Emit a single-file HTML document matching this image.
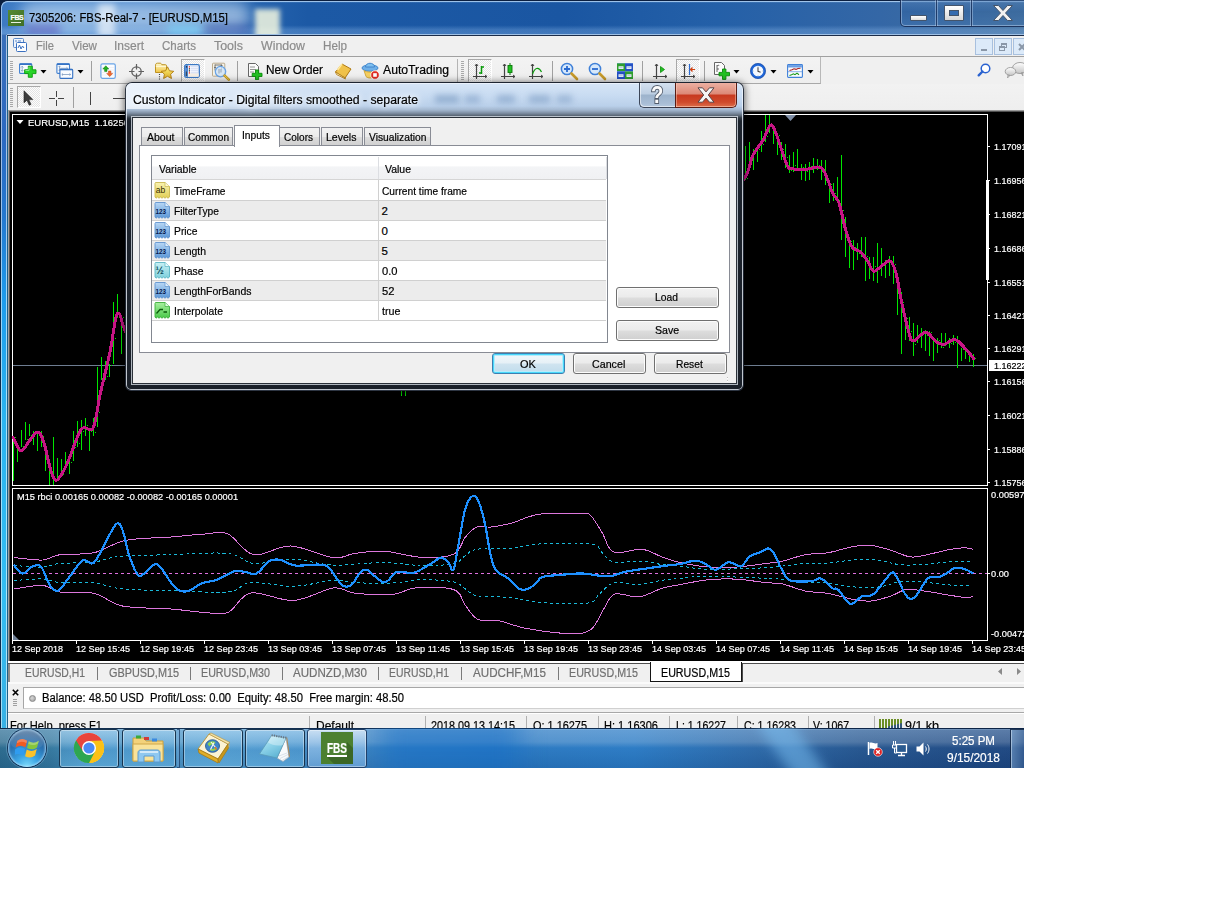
<!DOCTYPE html>
<html lang="en"><head>
<meta charset="utf-8">
<title>7305206: FBS-Real-7 - [EURUSD,M15]</title>
<style>
html,body{margin:0;padding:0;background:#fff;}
body{width:1228px;height:920px;overflow:hidden;position:relative;font-family:"Liberation Sans",sans-serif;font-size:12px;color:#000;}
#scr{position:absolute;left:0;top:0;width:1024px;height:768px;overflow:hidden;background:#f0f0f0;}
#scr div,#scr span,#scr svg{position:absolute;box-sizing:border-box;}
.t{white-space:pre;line-height:1;font-size:12px;-webkit-text-stroke:.2px currentColor;}
.m{color:#8c8c8c;font-size:12px;}
.d{font-size:11.5px;color:#000;}
.ax{font-size:9.5px;color:#fff;-webkit-text-stroke:.2px currentColor;}
.tab{font-size:12px;color:#707070;}
.sep{width:1px;background:#a0a0a0;}
.grip{width:3px;background:repeating-linear-gradient(to bottom,#a9a9a9 0,#a9a9a9 1px,transparent 1px,transparent 2px);}
.btn{border:1px solid #707070;border-radius:3px;background:linear-gradient(to bottom,#f2f2f2 0,#ebebeb 48%,#dddddd 52%,#cfcfcf 100%);box-shadow:inset 0 0 0 1px #fcfcfc;}
.dtab{border:1px solid #898c95;border-bottom:none;background:linear-gradient(to bottom,#f2f2f2 0,#ebebeb 48%,#dddddd 52%,#cfcfcf 100%);}
.row{left:0;width:454px;height:20px;border-bottom:1px solid #d0d0d0;}
.row.alt{background:#ececec;}
.tb{border:1px solid #17344f;border-radius:3px;background:linear-gradient(to bottom,rgba(175,218,246,.58) 0,rgba(110,178,226,.46) 45%,rgba(85,162,216,.42) 55%,rgba(110,190,236,.52) 100%);box-shadow:inset 0 0 0 1px rgba(255,255,255,.38);}
</style>
</head>
<body>
<div id="scr">
<!-- ===== main window frame / title bar ===== -->
<div id="titlebar" style="left:0;top:0;width:1024px;height:36px;background:linear-gradient(to right,#3d79c2 0,#3f82cc 6%,#3b7cc6 14%,#2a69b4 22%,#1c59a5 30%,#1a56a2 55%,#2460a8 70%,#3467a6 86%,#44719f 100%);overflow:hidden;">
  <div style="left:0;top:0;width:1024px;height:36px;background:linear-gradient(to bottom,rgba(0,10,40,.9) 0,rgba(0,10,40,.9) 1px,rgba(160,200,240,.55) 1px,rgba(160,200,240,.0) 3px,rgba(255,255,255,0) 70%,rgba(140,185,235,.3) 82%,rgba(140,185,235,.36) 95%,rgba(20,40,80,.7) 100%);"></div>
  <div style="left:20px;top:2px;width:230px;height:30px;border-radius:14px;background:rgba(225,238,252,.55);filter:blur(7px);"></div>
  <div style="left:98px;top:4px;width:17px;height:34px;background:rgba(255,255,255,.6);filter:blur(3px);"></div>
  <div style="left:168px;top:24px;width:34px;height:12px;background:rgba(120,220,255,.55);filter:blur(4px);"></div>
  <div style="left:255px;top:9px;width:25px;height:30px;background:rgba(245,248,225,.85);filter:blur(2.500px);"></div>
  <div style="left:26px;top:25px;width:34px;height:10px;background:rgba(70,50,170,.45);filter:blur(4px);"></div>
  <div style="left:205px;top:24px;width:45px;height:11px;background:rgba(30,50,150,.4);filter:blur(5px);"></div>
</div>
<div style="left:0;top:0;width:1040px;height:60px;border:1px solid #0b1f40;border-radius:7px 0 0 0;box-shadow:inset 1px 1px 0 rgba(190,220,250,.7);clip-path:inset(0 0 25px 0);"></div>
<div style="left:0;top:0;width:8px;height:8px;background:radial-gradient(circle at 8px 8px,transparent 0,transparent 7px,#0b1f40 7.500px);"></div>
<!-- app icon -->
<div style="left:8px;top:10px;width:16px;height:16px;background:linear-gradient(135deg,#558a34,#3f6e26);"><span class="t" style="left:2.500px;top:4px;font-size:7px;font-weight:bold;color:#fff;letter-spacing:-.4px;">FBS</span><div style="left:3px;top:12px;width:10px;height:1px;background:#e8f0e0;"></div></div>
<span class="t" id="ttl" style="left: 29px; top: 11.5px; font-size: 12.5px; --w: 199; transform-origin: 0px 0px; transform: scaleX(0.9065);">7305206: FBS-Real-7 - [EURUSD,M15]</span>
<!-- caption buttons -->
<div style="left:900px;top:-4px;width:140px;height:31px;border:1px solid rgba(20,40,80,.85);border-radius:0 0 0 5px;box-shadow:inset 0 0 0 1px rgba(200,220,245,.45);background:linear-gradient(to bottom,rgba(90,135,190,.55),rgba(50,100,165,.35) 45%,rgba(40,90,155,.25) 50%,rgba(70,120,180,.35));"></div>
<div style="left:936px;top:0;width:1px;height:26px;background:rgba(20,40,80,.7);box-shadow:1px 0 0 rgba(200,220,245,.4),-1px 0 0 rgba(200,220,245,.4);"></div>
<div style="left:971px;top:0;width:1px;height:26px;background:rgba(20,40,80,.7);box-shadow:1px 0 0 rgba(200,220,245,.4),-1px 0 0 rgba(200,220,245,.4);"></div>
<div style="left:910px;top:15px;width:17px;height:6px;background:linear-gradient(#fff,#dcdcdc);border:1px solid #44546a;border-radius:1px;"></div>
<div style="left:944px;top:5px;width:20px;height:16px;background:linear-gradient(#fff,#d8d8d8);border:1px solid #44546a;border-radius:1px;"><div style="left:4px;top:4px;width:10px;height:6px;background:#356cb0;border:1px solid #44546a;"></div></div>
<svg style="left:992px;top:4px;" width="22" height="18" viewBox="0 0 22 18"><path d="M1.5 1.5h5l4.5 5 4.500-5h5l-7 7.500 7 7.500h-5l-4.500-5-4.500 5h-5l7-7.500z" fill="#f2f2f2" stroke="#44546a" stroke-width="1"></path></svg>

<!-- left frame -->
<div style="left:0;top:35px;width:8px;height:700px;background:linear-gradient(to bottom,#3a70ba 0,#2c68c0 14%,#2478cf 26%,#1e9cec 38%,#2bb4f0 55%,#33bdf2 80%,#38b0e4 100%);"></div>
<div style="left:0;top:35px;width:1px;height:700px;background:#0b2a4c;"></div>
<div style="left:1px;top:35px;width:1px;height:700px;background:rgba(255,255,255,.55);"></div>
<div style="left:6px;top:35px;width:1px;height:700px;background:rgba(255,255,255,.6);"></div>
<div style="left:7px;top:35px;width:1px;height:700px;background:#1f5f85;"></div>

<!-- menu bar -->
<div style="left:7px;top:34px;width:1017px;height:1px;background:#9fc0e4;"></div><div style="left:7px;top:35px;width:1017px;height:1px;background:#1c2c48;"></div><div style="left:8px;top:36px;width:1016px;height:21px;background:#f0f0f0;border-bottom:1px solid #a0a0a0;"></div>
<svg style="left:12px;top:37px;" width="16" height="16" viewBox="0 0 16 16"><rect x="1.500" y="1.500" width="10" height="9" rx="1" fill="#eef4fc" stroke="#5a88c8"></rect><rect x="4.500" y="5.500" width="10" height="9" rx="1" fill="#fff" stroke="#3a70c0"></rect><path d="M6 11l1.500-3 1.500 4 1.500-3 1.500 2" fill="none" stroke="#3a70c0" stroke-width="1"></path><path d="M3 4h2M6 4h3" stroke="#5a88c8"></path></svg>
<span class="t m" style="left: 36px; top: 40px; --w: 18; transform-origin: 0px 0px; transform: scaleX(0.9305);">File</span>
<span class="t m" style="left: 72px; top: 40px; --w: 25; transform-origin: 0px 0px; transform: scaleX(0.9691);">View</span>
<span class="t m" style="left: 114px; top: 40px; --w: 30; transform-origin: 0px 0px; transform: scaleX(0.9995);">Insert</span>
<span class="t m" style="left: 162px; top: 40px; --w: 34; transform-origin: 0px 0px; transform: scaleX(0.962);">Charts</span>
<span class="t m" style="left: 214px; top: 40px; --w: 29; transform-origin: 0px 0px; transform: scaleX(1.0351);">Tools</span>
<span class="t m" style="left: 261px; top: 40px; --w: 44; transform-origin: 0px 0px; transform: scaleX(1.0307);">Window</span>
<span class="t m" style="left: 323px; top: 40px; --w: 24; transform-origin: 0px 0px; transform: scaleX(0.9722);">Help</span>
<!-- mdi child buttons -->
<div style="left:975px;top:38px;width:18px;height:17px;background:#dceaf9;border:1px solid #a8c0de;"><div style="left:5px;top:10px;width:6px;height:2px;background:#8a97a8;"></div></div>
<div style="left:994px;top:38px;width:18px;height:17px;background:#dceaf9;border:1px solid #a8c0de;"><div style="left:6px;top:4px;width:6px;height:5px;border:1px solid #8a97a8;border-top-width:2px;"></div><div style="left:4px;top:7px;width:6px;height:5px;border:1px solid #8a97a8;border-top-width:2px;background:#dceaf9;"></div></div>
<div style="left:1013px;top:38px;width:18px;height:17px;background:#dceaf9;border:1px solid #a8c0de;"><svg style="left:4px;top:4px;" width="8" height="8"><path d="M1 1l6 6M7 1l-6 6" stroke="#8a97a8" stroke-width="2"></path></svg></div>

<!-- toolbar row 1 -->
<div style="left:8px;top:57px;width:813px;height:27px;background:linear-gradient(#f3f3f3,#eeeeee);border-right:1px solid #b8b8b8;border-bottom:1px solid #a8a8a8;"></div>
<div style="left:8px;top:84px;width:1016px;height:27px;background:linear-gradient(#f2f2f2,#eeeeee);"></div>
<div class="grip" style="left:10px;top:61px;height:20px;"></div>
<div class="grip" style="left:10px;top:88px;height:20px;"></div>
<div class="grip" style="left:461px;top:61px;height:20px;"></div>
<!-- ===== toolbar 1 icons ===== -->
<!-- new chart -->
<svg style="left:18px;top:62px;" width="19" height="17" viewBox="0 0 19 17"><rect x="1.600" y="1.800" width="12.200" height="9.600" rx="1" fill="#f8fbff" stroke="#3f7fd0" stroke-width="1.100"></rect><path d="M1.600 2.200h12.200" stroke="#3572c4" stroke-width="1.600"></path><path d="M4.200 4.300v5M3 5.500l1.200-1.300 1.200 1.300M3 8l1.200 1.300L5.400 8" stroke="#7f9cc0" stroke-width=".8" fill="none"></path><path d="M10.300 4.200h4v3.600h3.700v3.800h-3.700v3.700h-4v-3.700H6.600V7.800h3.700z" fill="#28d428" stroke="#0c9a0c" stroke-width=".9"></path><path d="M11 5v3.500H7.400" stroke="#9af09a" stroke-width=".8" fill="none"></path></svg>
<svg style="left:40px;top:70px;" width="7" height="4"><path d="M.5 0h6L3.500 3.600z" fill="#000"></path></svg>
<!-- profiles -->
<svg style="left:55px;top:62px;" width="19" height="17" viewBox="0 0 19 17"><rect x="1.900" y="1.800" width="12.600" height="9.600" rx="1" fill="#f8fbff" stroke="#3f7fd0" stroke-width="1.100"></rect><path d="M1.900 2.200h12.600" stroke="#3572c4" stroke-width="1.600"></path><path d="M4.500 4.300v4M3.500 4.300h2M3.500 8.300h2M5 6.300h7.500M11.500 5.300l1.200 1-1.200 1" stroke="#7f9cc0" stroke-width=".8" fill="none"></path><rect x="4.900" y="7.200" width="12.800" height="9.200" rx="1" fill="#f8fbff" stroke="#3572c4" stroke-width="1.100"></rect><path d="M4.900 7.600h12.800" stroke="#3572c4" stroke-width="1.400"></path><path d="M7 12.500h8.500M8 11.500l-1.200 1 1.200 1M14.500 11.500l1.200 1-1.200 1" stroke="#7f9cc0" stroke-width=".8" fill="none"></path></svg>
<svg style="left:77px;top:70px;" width="7" height="4"><path d="M.5 0h6L3.500 3.600z" fill="#000"></path></svg>
<div class="sep" style="left:91px;top:61px;height:20px;"></div>
<!-- market watch -->
<svg style="left:100px;top:63px;" width="16" height="16" viewBox="0 0 16 16"><rect x=".9" y=".8" width="14.400" height="14.600" rx="1.600" fill="#fbfcfe" stroke="#6aa4e6" stroke-width="1.200"></rect><path d="M2 4.500h12M2 7h12M2 9.500h12M2 12h12" stroke="#ececf0" stroke-width=".7"></path><path d="M5.800 2.800l3 3.200h-1.800v2.400h-2.400V6H2.800z" fill="#22b022" stroke="#0b7a0b" stroke-width=".5"></path><path d="M9.700 13.600l-3-3.200h1.800V8h2.400v2.400h1.800z" fill="#f26a2c" stroke="#c0441a" stroke-width=".5"></path></svg>
<!-- data window crosshair -->
<svg style="left:129px;top:64px;" width="15" height="15" viewBox="0 0 15 15"><circle cx="7.500" cy="7.500" r="4.700" fill="none" stroke="#606060" stroke-width="1.300"></circle><path d="M7.500 0v5.500M7.500 9.500V15M0 7.500h5.500M9.500 7.500H15" stroke="#606060" stroke-width="1.200"></path></svg>
<!-- navigator folder + star -->
<svg style="left:154px;top:61px;" width="20" height="20" viewBox="0 0 20 20"><defs><linearGradient id="fo" x1="0" y1="0" x2="0" y2="1"><stop offset="0" stop-color="#fffad0"></stop><stop offset="1" stop-color="#f0c440"></stop></linearGradient><linearGradient id="st" x1="0" y1="0" x2="0" y2="1"><stop offset="0" stop-color="#fff27a"></stop><stop offset="1" stop-color="#dcae28"></stop></linearGradient></defs><path d="M1.500 4.200c0-1.500 1-2 2-2h2.500c1 0 1.500.6 1.800 1.500h3.700c.8 0 1 .5 1 1v6.800h-11z" fill="url(#fo)" stroke="#b98a12" stroke-width=".9"></path><path d="M1.800 5.500h10.400" stroke="#fffbe0" stroke-width=".8"></path><path d="M5.500 13v5.500" stroke="#444" stroke-width="1.100" stroke-dasharray="1.100 1.100"></path><path d="M13.500 5.800l2 4 4.300.5-3.200 2.900.9 4.300-4-2.200-3.900 2.200.8-4.300-3.200-2.900 4.400-.5z" fill="url(#st)" stroke="#b07a10" stroke-width=".9"></path></svg>
<!-- terminal (pressed) -->
<div style="left:181px;top:59px;width:24px;height:23px;border:1px solid;border-color:#a8a8a8 #fff #fff #a8a8a8;background-color:#fafafa;background-image:repeating-conic-gradient(#e4e4e4 0 25%,#fdfdfd 0 50%);background-size:2px 2px;"></div>
<svg style="left:184px;top:64px;" width="16" height="14" viewBox="0 0 16 14"><rect x=".7" y=".7" width="14.600" height="12.600" rx="1.500" fill="#fbfcff" stroke="#3a78c4" stroke-width="1.300"></rect><rect x="1.200" y="1.200" width="2.800" height="11.600" fill="#4a86d4"></rect><rect x="1.800" y="7.500" width="1.200" height="4.500" fill="#3a4a5a"></rect><rect x="4" y="9.300" width="10.700" height="3.400" fill="#f6efe6"></rect><path d="M6.500 2.800h8M6.500 4.800h8M6.500 6.800h8M6.500 8.800h8" stroke="#b8c8ec" stroke-width=".7"></path><path d="M4.800 2.800h1.200M4.800 8.800h1.200" stroke="#f02020" stroke-width="1.200"></path><path d="M4.800 4.800h1.200M4.800 6.800h1.200M1.900 2.800h1.200" stroke="#222" stroke-width="1.200"></path></svg>
<!-- strategy tester -->
<svg style="left:211px;top:61px;" width="20" height="20" viewBox="0 0 20 20"><rect x="1.500" y="2.200" width="12.300" height="13" rx=".8" fill="#f6f2e6" stroke="#b4a484" stroke-width=".9"></rect><path d="M4 3.500v6M3 6.500h2M10.500 3.500v5M9.500 4.500h2M4 4h6.500" stroke="#6a6a6a" stroke-width=".9" fill="none"></path><circle cx="9.500" cy="10.600" r="5.200" fill="#cfe4f8" fill-opacity=".82" stroke="#6aa4e6" stroke-width="1.300"></circle><path d="M8 8v4.500M10 8v3.500" stroke="#9aa8b8" stroke-width="1.400" opacity=".8"></path><path d="M13.600 14.600l4.200 4" stroke="#c79a1a" stroke-width="2.600" stroke-linecap="round"></path><path d="M13.600 14.600l4.200 4" stroke="#f0d060" stroke-width=".8" stroke-linecap="round"></path></svg>
<div class="sep" style="left:237px;top:61px;height:20px;"></div>
<!-- new order -->
<svg style="left:246px;top:62px;" width="17" height="18" viewBox="0 0 17 18"><path d="M2.500 1.500h7l3 3v10h-10z" fill="#fbfbfb" stroke="#666" stroke-width="1"></path><path d="M4 5h5M4 7.500h6M4 10h4" stroke="#888" stroke-width=".9"></path><path d="M9.500 8h3.200v3.300H16v3.200h-3.300V17.700H9.500V14.500H6.200V11.300H9.500z" fill="#22c022" stroke="#0a8a0a" stroke-width=".9"></path></svg>
<span class="t" style="left: 266px; top: 64px; font-size: 12px; --w: 57; transform-origin: 0px 0px; transform: scaleX(0.9825);">New Order</span>
<!-- book -->
<svg style="left:334px;top:62px;" width="18" height="18" viewBox="0 0 18 18"><path d="M1.500 10L8 2l9 5-6 9z" fill="#f0c24a" stroke="#b07a12" stroke-width="1"></path><path d="M1.500 10l1 2.500L11.500 17l-.5-1z" fill="#fff2c0" stroke="#b07a12" stroke-width=".8"></path><path d="M8 2l-4.500 6" stroke="#ffe9a0" stroke-width="1.500"></path></svg>
<!-- autotrading -->
<svg style="left:361px;top:61px;" width="19" height="19" viewBox="0 0 19 19"><ellipse cx="9" cy="7" rx="8" ry="3.200" fill="#6fb0e8" stroke="#3a80c8" stroke-width=".9"></ellipse><path d="M4.500 6c0-5 9-5 9 0z" fill="#7fc0f0" stroke="#3a80c8" stroke-width=".9"></path><path d="M3 9.500c2 2 10 2 12 0l-2 6c-2 2-6 2-8 0z" fill="#f6d060" stroke="#c89a28" stroke-width=".8"></path><circle cx="14" cy="14" r="4.300" fill="#e02a20" stroke="#fff" stroke-width=".8"></circle><rect x="12.200" y="12.200" width="3.600" height="3.600" fill="#fff"></rect></svg>
<span class="t" style="left: 383px; top: 64px; font-size: 12px; --w: 66; transform-origin: 0px 0px; transform: scaleX(1.0164);">AutoTrading</span>
<div class="sep" style="left:457px;top:59px;height:24px;background:#b4b4b4;"></div>
<!-- bar chart (pressed) -->
<div style="left:468px;top:59px;width:24px;height:23px;border:1px solid;border-color:#a8a8a8 #fff #fff #a8a8a8;background-color:#fafafa;background-image:repeating-conic-gradient(#e4e4e4 0 25%,#fdfdfd 0 50%);background-size:2px 2px;"></div>
<svg style="left:472px;top:63px;" width="16" height="17" viewBox="0 0 16 17"><path d="M4.500 1v15M1 13.500h14" stroke="#444" stroke-width="1.200"></path><path d="M3 3l1.500-2 1.500 2M13 12l2 1.500-2 1.500" fill="none" stroke="#444" stroke-width="1"></path><path d="M9.500 3v8M9.500 4h2.500M7 10h2.500" stroke="#0a9a0a" stroke-width="1.500"></path></svg>
<!-- candle -->
<svg style="left:500px;top:63px;" width="16" height="17" viewBox="0 0 16 17"><path d="M4.500 1v15M1 13.500h14" stroke="#444" stroke-width="1.200"></path><path d="M3 3l1.500-2 1.500 2M13 12l2 1.500-2 1.500" fill="none" stroke="#444" stroke-width="1"></path><path d="M10 0v12" stroke="#0a7a0a" stroke-width="1"></path><rect x="8" y="2.500" width="4" height="7" fill="#22c022" stroke="#0a7a0a" stroke-width=".9"></rect></svg>
<!-- line -->
<svg style="left:528px;top:63px;" width="16" height="17" viewBox="0 0 16 17"><path d="M4.500 1v15M1 13.500h14" stroke="#444" stroke-width="1.200"></path><path d="M3 3l1.500-2 1.500 2M13 12l2 1.500-2 1.500" fill="none" stroke="#444" stroke-width="1"></path><path d="M4.500 11c2-6 6-8 9-2" fill="none" stroke="#0a9a0a" stroke-width="1.200"></path></svg>
<div class="sep" style="left:552px;top:61px;height:20px;"></div>
<!-- zoom in -->
<svg style="left:560px;top:62px;" width="19" height="19" viewBox="0 0 19 19"><circle cx="7" cy="7" r="5.600" fill="#d6e8fb" stroke="#3f80d8" stroke-width="1.500"></circle><path d="M4 7h6M7 4v6" stroke="#2a6ad0" stroke-width="1.800"></path><path d="M11.500 11.500l5.500 5.500" stroke="#c79a2a" stroke-width="2.600" stroke-linecap="round"></path></svg>
<!-- zoom out -->
<svg style="left:588px;top:62px;" width="19" height="19" viewBox="0 0 19 19"><circle cx="7" cy="7" r="5.600" fill="#d6e8fb" stroke="#3f80d8" stroke-width="1.500"></circle><path d="M4 7h6" stroke="#2a6ad0" stroke-width="1.800"></path><path d="M11.500 11.500l5.500 5.500" stroke="#c79a2a" stroke-width="2.600" stroke-linecap="round"></path></svg>
<!-- tile -->
<svg style="left:617px;top:63px;" width="16" height="16" viewBox="0 0 16 16"><rect x="0" y="0" width="8" height="8" fill="#2f9e2f"></rect><rect x="8" y="0" width="8" height="8" fill="#2450c4"></rect><rect x="0" y="8" width="8" height="8" fill="#2450c4"></rect><rect x="8" y="8" width="8" height="8" fill="#2f9e2f"></rect><path d="M0 .5h16M0 8.500h16" stroke="#7fb0e8" stroke-width=".6" opacity=".7"></path><path d="M1.500 4.600h5M9.500 4.600h5M1.500 12.600h5M9.500 12.600h5" stroke="#e8f0f8" stroke-width="2.600"></path><path d="M2.300 4.600h3.400M10.300 4.600h3.400M2.300 12.600h3.400M10.300 12.600h3.400" stroke="#9db8d8" stroke-width=".7"></path></svg>
<div class="sep" style="left:642px;top:61px;height:20px;"></div>
<!-- autoscroll -->
<svg style="left:652px;top:63px;" width="16" height="17" viewBox="0 0 16 17"><path d="M4.500 1v15M1 13.500h14" stroke="#444" stroke-width="1.200"></path><path d="M3 3l1.500-2 1.500 2M13 12l2 1.500-2 1.500" fill="none" stroke="#444" stroke-width="1"></path><path d="M8.500 3.500l4 3-4 3z" fill="#22c022" stroke="#0a8a0a" stroke-width=".8"></path></svg>
<!-- chart shift (pressed) -->
<div style="left:676px;top:59px;width:24px;height:23px;border:1px solid;border-color:#a8a8a8 #fff #fff #a8a8a8;background-color:#fafafa;background-image:repeating-conic-gradient(#e4e4e4 0 25%,#fdfdfd 0 50%);background-size:2px 2px;"></div>
<svg style="left:680px;top:63px;" width="16" height="17" viewBox="0 0 16 17"><path d="M4.500 1v15M1 13.500h14" stroke="#444" stroke-width="1.200"></path><path d="M3 3l1.500-2 1.500 2M13 12l2 1.500-2 1.500" fill="none" stroke="#444" stroke-width="1"></path><path d="M9.500 1v11" stroke="#2a6ad0" stroke-width="1.200"></path><path d="M15 6.500h-4M12.500 4.500l-2 2 2 2" fill="none" stroke="#d04010" stroke-width="1.200"></path></svg>
<div class="sep" style="left:704px;top:61px;height:20px;"></div>
<!-- indicators -->
<svg style="left:713px;top:61px;" width="18" height="19" viewBox="0 0 18 19"><path d="M1.500 1.500h7l3 3v9h-10z" fill="#fbfbfb" stroke="#666" stroke-width="1"></path><path d="M4 4v7M4 5c1-1 2-1 2 0M4 8h2" stroke="#555" stroke-width=".9" fill="none"></path><path d="M9.500 8h3.400v3.400h3.600v3.400h-3.600v3.600H9.500v-3.600H6v-3.400h3.500z" fill="#22c022" stroke="#0a8a0a" stroke-width=".9"></path></svg>
<svg style="left:733px;top:70px;" width="7" height="4"><path d="M.5 0h6L3.500 3.600z" fill="#000"></path></svg>
<!-- clock -->
<svg style="left:750px;top:63px;" width="16" height="16" viewBox="0 0 16 16"><circle cx="8" cy="8" r="6.500" fill="#f4f8ff" stroke="#1f66d8" stroke-width="2.300"></circle><circle cx="8" cy="8" r="7.600" fill="none" stroke="#134098" stroke-width=".6"></circle><path d="M8 4.300v4l2.600 1" fill="none" stroke="#444" stroke-width="1.100"></path><path d="M8 2.800v.8M8 12.400v.8M2.800 8h.8M12.400 8h.8" stroke="#8aa" stroke-width=".7"></path></svg>
<svg style="left:770px;top:70px;" width="7" height="4"><path d="M.5 0h6L3.500 3.600z" fill="#000"></path></svg>
<!-- templates -->
<svg style="left:787px;top:64px;" width="16" height="14" viewBox="0 0 16 14"><rect x=".6" y=".6" width="14.800" height="12.800" rx=".8" fill="#fafcff" stroke="#3f80d8" stroke-width="1.100"></rect><rect x="1.100" y="1.100" width="13.800" height="2.400" fill="#6a9ee4"></rect><path d="M1 7.700h14" stroke="#5a90dc" stroke-width=".7"></path><path d="M2.500 6.500l2.500-.8 2 -.9 2 .6 2-.9 2.500-.3" fill="none" stroke="#a82020" stroke-width="1.100"></path><path d="M2.500 11.500l2-.8 2-.9 1.500.9 2-1.600 2 1.600" fill="none" stroke="#1a9a1a" stroke-width="1.100"></path></svg>
<svg style="left:807px;top:70px;" width="7" height="4"><path d="M.5 0h6L3.500 3.600z" fill="#000"></path></svg>
<!-- right: search + chat -->
<svg style="left:975px;top:62px;" width="18" height="18" viewBox="0 0 18 18"><circle cx="10.500" cy="6.500" r="4.300" fill="#fff" stroke="#2a62d0" stroke-width="1.500"></circle><path d="M7.500 9.500l-3.800 3.800" stroke="#2a62d0" stroke-width="2.400" stroke-linecap="round"></path></svg>
<svg style="left:1004px;top:61px;" width="22" height="20" viewBox="0 0 22 20"><defs><linearGradient id="cb" x1="0" y1="0" x2="0" y2="1"><stop offset="0" stop-color="#ffffff"></stop><stop offset="1" stop-color="#c4c4c4"></stop></linearGradient></defs><ellipse cx="16" cy="7" rx="7.500" ry="5.500" fill="url(#cb)" stroke="#9a9a9a" stroke-width=".9"></ellipse><path d="M17 12l2 3-.5-3.500z" fill="#bbb" stroke="#8a8a8a" stroke-width=".6"></path><ellipse cx="6.500" cy="10.500" rx="5.300" ry="4" fill="url(#cb)" stroke="#9a9a9a" stroke-width=".9"></ellipse><path d="M4 14l-.5 3 2.500-2.500z" fill="#ccc" stroke="#8a8a8a" stroke-width=".6"></path></svg>

<!-- ===== toolbar 2 ===== -->
<div style="left:17px;top:86px;width:24px;height:22px;border:1px solid;border-color:#a8a8a8 #fff #fff #a8a8a8;background-color:#fafafa;background-image:repeating-conic-gradient(#e4e4e4 0 25%,#fdfdfd 0 50%);background-size:2px 2px;"></div>
<svg style="left:23px;top:90px;" width="11" height="16" viewBox="0 0 11 16"><path d="M1 .8v12l3-2.600 2.200 5 1.800-.8-2.200-4.800h4z" fill="#3c3c3c" stroke="#222" stroke-width=".6"></path></svg>
<svg style="left:49px;top:91px;" width="15" height="15" viewBox="0 0 15 15"><path d="M7.500 0v6M7.500 9v6M0 7.500h6M9 7.500h6" stroke="#444" stroke-width="1"></path></svg>
<div class="sep" style="left:73px;top:87px;height:21px;"></div>
<div style="left:90px;top:92px;width:1px;height:13px;background:#444;"></div>
<div style="left:113px;top:98px;width:14px;height:1px;background:#444;"></div>
<!-- ===== chart area ===== -->
<div style="left:8px;top:111px;width:1016px;height:550px;background:#000;border-left:1px solid #a0a0a0;"></div>
<div style="left:8px;top:110px;width:1016px;height:1px;background:#9a9a9a;"></div><div style="left:9px;top:111px;width:1015px;height:1px;background:#505050;"></div>
<div style="left:9px;top:111px;width:1px;height:550px;background:#555;"></div>
<div style="left:12px;top:114px;width:976px;height:372px;border:1px solid #fff;border-bottom:1px solid #fff;"></div>
<div style="left:12px;top:488px;width:976px;height:153px;border:1px solid #fff;"></div>
<div style="left:986px;top:180px;width:3px;height:100px;background:#fff;"></div>
<svg style="left:0;top:111px;" width="1024" height="376" viewBox="0 111 1024 376" shape-rendering="crispEdges"><path d="M13 365.500H987" stroke="#6e7d91" stroke-width="1"></path><g transform="translate(.5 0)"><path d="M13 436V481M12 437h1M14 437h1M17 445V462M16 448h1M18 447h1M21 430V447M20 446h1M22 446h1M25 422V440M24 439h1M26 439h1M29 424V436M28 435h1M30 435h1M33 431V445M32 439h1M34 433h1M37 433V451M36 434h1M38 434h1M41 431V447M40 434h1M42 436h1M45 455V471M44 456h1M46 456h1M49 467V485M48 468h1M50 468h1M53 437V485M52 476h1M54 478h1M57 458V479M56 477h1M58 478h1M61 459V475M60 470h1M62 474h1M65 452V469M64 465h1M66 464h1M69 457V474M68 458h1M70 462h1M73 431V461M72 452h1M74 447h1M77 421V447M76 437h1M78 443h1M81 420V450M80 430h1M82 431h1M85 418V436M84 426h1M86 425h1M89 430V451M88 431h1M90 431h1M93 418V436M92 425h1M94 432h1M97 367V427M96 410h1M98 412h1M101 357V380M100 379h1M102 379h1M105 361V380M104 370h1M106 376h1M109 364V377M108 365h1M110 365h1M113 302V364M112 335h1M114 338h1M117 294V318M116 315h1M118 314h1M121 316V354M120 318h1M122 317h1M125 321V340M124 326h1M126 327h1M129 328V341M128 332h1M130 333h1M133 331V347M132 340h1M134 340h1M137 334V351M136 346h1M138 342h1M141 337V350M140 341h1M142 339h1M145 335V347M144 338h1M146 336h1M149 332V342M148 335h1M150 333h1M153 326V346M152 336h1M154 335h1M157 327V338M156 329h1M158 332h1M161 320V344M160 334h1M162 327h1M165 321V339M164 334h1M166 331h1M169 318V337M168 332h1M170 335h1M173 321V340M172 332h1M174 333h1M177 329V339M176 336h1M178 338h1M181 328V347M180 334h1M182 338h1M185 330V346M184 338h1M186 337h1M189 327V345M188 336h1M190 336h1M193 329V343M192 335h1M194 335h1M197 335V345M196 336h1M198 341h1M201 329V348M200 337h1M202 337h1M205 330V347M204 334h1M206 340h1M209 326V342M208 338h1M210 336h1M213 320V343M212 330h1M214 330h1M217 323V340M216 328h1M218 329h1M221 318V340M220 325h1M222 327h1M225 314V332M224 323h1M226 329h1M229 309V328M228 326h1M230 323h1M233 312V332M232 318h1M234 324h1M237 312V327M236 316h1M238 317h1M241 311V326M240 312h1M242 314h1M245 301V323M244 313h1M246 313h1M249 298V318M248 308h1M250 311h1M253 300V321M252 307h1M254 309h1M257 302V321M256 309h1M258 311h1M261 301V327M260 310h1M262 309h1M265 306V325M264 313h1M266 312h1M269 311V327M268 316h1M270 316h1M273 306V331M272 319h1M274 318h1M277 306V325M276 320h1M278 321h1M281 311V330M280 318h1M282 318h1M285 316V329M284 324h1M286 318h1M289 316V327M288 323h1M290 323h1M293 318V335M292 319h1M294 326h1M297 319V331M296 327h1M298 325h1M301 317V337M300 326h1M302 327h1M305 318V331M304 320h1M306 323h1M309 311V333M308 321h1M310 323h1M313 306V331M312 321h1M314 321h1M317 310V325M316 317h1M318 320h1M321 307V327M320 316h1M322 316h1M325 299V318M324 310h1M326 309h1M329 305V317M328 308h1M330 309h1M333 302V317M332 305h1M334 311h1M337 297V313M336 307h1M338 308h1M341 300V313M340 306h1M342 306h1M345 295V312M344 302h1M346 299h1M349 287V311M348 303h1M350 302h1M353 293V312M352 302h1M354 302h1M357 293V309M356 305h1M358 301h1M361 294V318M360 308h1M362 305h1M365 296V321M364 306h1M366 307h1M369 303V319M368 313h1M370 309h1M373 309V324M372 316h1M374 318h1M377 312V321M376 316h1M378 315h1M381 313V324M380 318h1M382 320h1M385 314V326M384 323h1M386 322h1M389 319V329M388 325h1M390 320h1M393 321V333M392 323h1M394 324h1M397 324V341M396 330h1M398 327h1M401 330V396M400 331h1M402 331h1M405 335V396M404 336h1M406 336h1M409 315V328M408 324h1M410 324h1M413 307V334M412 321h1M414 318h1M417 308V325M416 317h1M418 316h1M421 308V318M420 313h1M422 310h1M425 303V317M424 313h1M426 308h1M429 295V312M428 311h1M430 310h1M433 299V317M432 300h1M434 303h1M437 291V306M436 303h1M438 304h1M441 288V301M440 297h1M442 295h1M445 285V308M444 292h1M446 298h1M449 278V302M448 288h1M450 291h1M453 282V296M452 285h1M454 288h1M457 280V298M456 289h1M458 283h1M461 274V295M460 286h1M462 283h1M465 274V287M464 284h1M466 283h1M469 266V292M468 276h1M470 282h1M473 264V288M472 276h1M474 272h1M477 262V285M476 270h1M478 274h1M481 265V281M480 271h1M482 270h1M485 261V273M484 266h1M486 268h1M489 262V273M488 265h1M490 269h1M493 258V275M492 260h1M494 266h1M497 248V270M496 265h1M498 259h1M501 247V274M500 264h1M502 262h1M505 248V269M504 264h1M506 260h1M509 256V269M508 261h1M510 261h1M513 257V269M512 267h1M514 264h1M517 254V277M516 263h1M518 264h1M521 253V274M520 263h1M522 262h1M525 256V278M524 263h1M526 269h1M529 262V278M528 266h1M530 271h1M533 255V280M532 266h1M534 266h1M537 258V278M536 269h1M538 267h1M541 264V282M540 269h1M542 274h1M545 264V283M544 274h1M546 274h1M549 259V280M548 273h1M550 276h1M553 265V287M552 277h1M554 274h1M557 263V280M556 276h1M558 271h1M561 269V280M560 276h1M562 274h1M565 258V283M564 273h1M566 272h1M569 263V281M568 267h1M570 265h1M573 251V276M572 269h1M574 262h1M577 255V272M576 262h1M578 261h1M581 254V263M580 258h1M582 261h1M585 243V267M584 260h1M586 254h1M589 244V267M588 254h1M590 252h1M593 242V263M592 251h1M594 249h1M597 235V253M596 245h1M598 245h1M601 238V251M600 242h1M602 247h1M605 235V251M604 241h1M606 239h1M609 232V246M608 242h1M610 242h1M613 230V248M612 235h1M614 232h1M617 225V241M616 230h1M618 229h1M621 220V243M620 228h1M622 226h1M625 221V242M624 227h1M626 227h1M629 219V237M628 228h1M630 231h1M633 218V231M632 229h1M634 226h1M637 217V232M636 225h1M638 226h1M641 221V237M640 224h1M642 223h1M645 218V232M644 220h1M646 222h1M649 211V232M648 226h1M650 220h1M653 214V231M652 222h1M654 223h1M657 211V233M656 224h1M658 218h1M661 215V229M660 218h1M662 218h1M665 212V226M664 218h1M666 218h1M669 206V227M668 221h1M670 221h1M673 207V228M672 220h1M674 213h1M677 203V224M676 212h1M678 217h1M681 205V224M680 218h1M682 215h1M685 205V225M684 214h1M686 210h1M689 204V222M688 212h1M690 216h1M693 203V225M692 214h1M694 215h1M697 200V224M696 215h1M698 209h1M701 196V216M700 207h1M702 207h1M705 199V222M704 209h1M706 210h1M709 195V213M708 211h1M710 210h1M713 202V215M712 208h1M714 209h1M717 201V212M716 205h1M718 206h1M721 199V215M720 200h1M722 206h1M725 188V213M724 197h1M726 203h1M729 190V206M728 196h1M730 194h1M733 180V196M732 188h1M734 189h1M737 174V200M736 188h1M738 188h1M741 176V196M740 179h1M742 179h1M745 146V180M744 177h1M746 178h1M749 142V165M748 164h1M750 164h1M753 149V170M752 156h1M754 151h1M757 146V162M756 148h1M758 149h1M761 131V152M760 147h1M762 144h1M765 115V142M764 139h1M766 136h1M769 115V133M768 126h1M770 126h1M773 128V144M772 133h1M774 131h1M777 134V155M776 135h1M778 135h1M781 142V160M780 148h1M782 149h1M785 144V168M784 159h1M786 157h1M789 155V173M788 168h1M790 170h1M793 152V172M792 166h1M794 165h1M797 149V170M796 168h1M798 168h1M801 164V180M800 170h1M802 167h1M805 164V181M804 171h1M806 171h1M809 162V180M808 169h1M810 166h1M813 158V173M812 172h1M814 166h1M817 159V170M816 169h1M818 165h1M821 160V180M820 167h1M822 171h1M825 160V185M824 172h1M826 177h1M829 183V203M828 184h1M830 184h1M833 183V201M832 191h1M834 193h1M837 177V201M836 200h1M838 200h1M841 155V240M840 208h1M842 210h1M845 217V257M844 225h1M846 231h1M849 240V268M848 241h1M850 241h1M853 240V270M852 244h1M854 247h1M857 243V260M856 253h1M858 253h1M861 237V257M860 255h1M862 256h1M865 237V281M864 261h1M866 256h1M869 257V279M868 261h1M870 267h1M873 257V281M872 272h1M874 266h1M877 243V283M876 270h1M878 268h1M881 248V276M880 265h1M882 265h1M885 260V278M884 261h1M886 261h1M889 256V276M888 260h1M890 260h1M893 256V284M892 271h1M894 264h1M897 286V315M896 287h1M898 287h1M901 292V354M900 298h1M902 302h1M905 317V340M904 319h1M906 318h1M909 317V341M908 328h1M910 331h1M913 323V356M912 340h1M914 344h1M917 325V343M916 336h1M918 337h1M921 328V348M920 338h1M922 332h1M925 330V351M924 332h1M926 335h1M929 331V356M928 337h1M930 332h1M933 340V361M932 341h1M934 341h1M937 338V353M936 345h1M938 340h1M941 333V348M940 345h1M942 347h1M945 333V346M944 343h1M946 342h1M949 338V348M948 346h1M950 343h1M953 335V345M952 339h1M954 342h1M957 336V368M956 340h1M958 340h1M961 348V361M960 349h1M962 349h1M965 349V359M964 352h1M966 350h1M969 353V362M968 357h1M970 354h1M973 354V367M972 356h1M974 358h1" stroke="#00e600" stroke-width="1" fill="none"></path></g><path shape-rendering="crispEdges" d="M13.0 437.0C14.3 439.3 18.2 450.5 21.0 451.0C23.8 451.5 27.2 443.2 30.0 440.0C32.8 436.8 35.7 431.5 38.0 432.0C40.3 432.5 41.8 436.5 44.0 443.0C46.2 449.5 48.8 464.8 51.0 471.0C53.2 477.2 54.3 481.2 57.0 480.0C59.7 478.8 63.0 472.4 67.0 464.0C71.0 455.6 76.7 435.5 81.0 429.5C85.3 423.5 89.8 433.8 93.0 428.0C96.2 422.2 97.2 407.7 100.0 395.0C102.8 382.3 107.3 365.0 110.0 352.0C112.7 339.0 114.3 323.2 116.0 317.0C117.7 310.8 118.7 313.2 120.0 315.0C121.3 316.8 121.5 323.0 124.0 328.0C126.5 333.0 129.0 344.7 135.0 345.0C141.0 345.3 149.2 330.8 160.0 330.0C170.8 329.2 185.0 343.3 200.0 340.0C215.0 336.7 233.3 312.5 250.0 310.0C266.7 307.5 283.3 326.7 300.0 325.0C316.7 323.3 333.3 299.2 350.0 300.0C366.7 300.8 383.3 331.7 400.0 330.0C416.7 328.3 433.3 301.7 450.0 290.0C466.7 278.3 481.7 262.5 500.0 260.0C518.3 257.5 540.0 280.0 560.0 275.0C580.0 270.0 600.0 240.0 620.0 230.0C640.0 220.0 663.3 219.2 680.0 215.0C696.7 210.8 709.2 211.2 720.0 205.0C730.8 198.8 739.2 186.3 744.7 178.0C750.2 169.7 750.0 161.2 753.0 155.0C756.0 148.8 759.6 146.0 762.6 141.0C765.6 136.0 768.4 125.8 770.8 125.0C773.2 124.2 774.3 129.3 777.0 136.0C779.7 142.7 784.2 159.5 787.0 165.0C789.8 170.5 790.1 168.3 793.6 169.0C797.1 169.7 803.9 169.3 808.0 169.0C812.1 168.7 815.2 166.5 818.0 167.0C820.8 167.5 822.0 167.7 824.5 172.0C827.0 176.3 830.3 187.8 832.7 193.0C835.1 198.2 836.8 196.8 839.0 203.0C841.2 209.2 843.5 222.7 845.7 230.0C847.9 237.3 849.6 243.4 852.0 247.0C854.4 250.6 857.5 249.4 860.0 251.6C862.5 253.8 864.8 256.8 867.0 260.0C869.2 263.2 871.1 270.0 873.5 271.0C875.9 272.0 878.9 267.7 881.6 266.0C884.4 264.3 887.6 259.8 890.0 261.0C892.4 262.2 894.2 266.7 896.0 273.0C897.8 279.3 899.0 289.8 901.0 299.0C903.0 308.2 905.7 321.0 907.7 328.0C909.7 335.0 910.0 340.3 913.0 341.0C916.0 341.7 921.9 332.0 925.6 332.0C929.3 332.0 932.4 338.9 935.4 341.0C938.4 343.1 940.3 344.7 943.6 344.5C946.9 344.3 951.5 339.0 955.0 339.6C958.5 340.2 961.6 344.8 964.8 348.0C968.0 351.2 972.5 357.2 974.0 359.0" fill="none" stroke="#c71585" stroke-width="3" stroke-linejoin="round" stroke-linecap="round"></path><path d="M785 115h11l-5.500 6z" fill="#7f8ea6" shape-rendering="geometricPrecision"></path></svg>
<svg style="left:0;top:487px;" width="1024" height="175" viewBox="0 487 1024 175"><path d="M13 573.500H987" stroke="#e070e0" stroke-width="1" stroke-dasharray="3 3" shape-rendering="crispEdges"></path><path d="M13.7 557.5C18.5 557.9 35.0 560.5 42.7 560.0C50.4 559.5 51.2 555.9 59.8 554.7C68.3 553.5 83.1 555.1 94.0 552.7C104.9 550.3 112.6 543.0 125.4 540.4C138.2 537.8 157.7 538.1 171.0 537.0C184.3 535.9 195.5 534.5 205.0 534.0C214.5 533.5 219.9 530.5 228.0 534.0C236.1 537.5 243.2 552.7 253.6 554.7C264.1 556.7 277.4 545.5 290.7 546.0C304.0 546.5 322.8 556.5 333.4 557.8C344.0 559.0 345.7 554.6 354.2 553.5C362.7 552.4 372.8 550.5 384.2 551.2C395.6 551.9 411.0 557.0 422.6 557.5C434.2 558.0 446.9 557.4 454.0 554.0C461.1 550.6 461.6 541.5 465.4 537.0C469.2 532.5 472.5 528.7 476.8 527.0C481.1 525.3 485.3 527.6 491.0 527.0C496.7 526.4 502.9 525.4 511.0 523.3C519.1 521.2 527.6 515.8 539.5 514.2C551.4 512.6 573.7 513.4 582.2 513.6C590.8 513.8 587.5 512.4 590.8 515.6C594.1 518.8 598.4 526.6 602.2 532.7C606.0 538.8 607.0 549.2 613.6 552.0C620.2 554.8 633.9 548.5 642.0 549.3C650.1 550.1 655.7 554.8 662.0 557.0C668.3 559.2 672.2 560.9 680.0 562.6C687.8 564.3 699.0 566.3 708.5 567.0C718.0 567.7 727.5 567.6 737.0 567.0C746.5 566.4 757.9 564.5 765.5 563.5C773.1 562.5 776.0 562.7 782.6 561.2C789.2 559.7 797.8 556.1 805.4 554.7C813.0 553.3 820.1 554.1 828.2 552.7C836.3 551.3 846.7 547.6 853.8 546.4C860.9 545.2 865.3 545.0 871.0 545.5C876.7 546.0 881.8 547.5 888.0 549.3C894.2 551.1 902.8 555.2 908.0 556.4C913.2 557.6 912.3 557.6 919.4 556.4C926.5 555.2 943.1 550.7 950.7 549.3C958.3 547.9 961.3 547.8 965.0 547.8C968.7 547.8 971.7 549.0 973.0 549.3" fill="none" stroke="#dd77dd" stroke-width="1" shape-rendering="crispEdges"></path><path d="M13.7 589.0C18.5 588.4 35.0 584.9 42.7 585.4C50.4 585.9 51.2 590.7 59.8 592.0C68.3 593.3 83.5 591.1 94.0 593.4C104.5 595.7 109.7 603.4 122.5 606.0C135.3 608.6 157.2 607.9 171.0 609.0C184.8 610.1 195.5 611.9 205.0 612.5C214.5 613.1 220.4 615.8 228.0 612.5C235.6 609.2 239.9 595.0 250.8 593.0C261.7 591.0 279.7 601.3 293.5 600.5C307.3 599.7 323.3 589.2 333.4 588.0C343.5 586.8 344.5 591.9 354.2 593.0C363.9 594.1 380.8 595.5 391.3 594.6C401.8 593.7 406.6 588.5 417.0 587.7C427.4 586.9 445.9 586.8 454.0 589.7C462.1 592.7 461.4 600.4 465.4 605.4C469.4 610.4 472.5 617.0 478.2 619.6C483.9 622.2 491.8 619.6 499.6 621.0C507.4 622.4 514.8 626.2 525.2 628.2C535.7 630.2 552.8 632.4 562.3 633.3C571.8 634.1 577.0 634.4 582.2 633.3C587.4 632.2 589.8 631.2 593.6 626.8C597.4 622.4 601.4 612.3 605.0 606.8C608.6 601.3 609.3 595.7 615.0 594.0C620.7 592.3 631.4 597.8 639.2 596.8C647.0 595.8 655.2 590.3 662.0 588.3C668.8 586.3 672.2 586.0 680.0 584.6C687.8 583.2 699.0 580.6 708.5 579.7C718.0 578.8 727.5 578.7 737.0 579.2C746.5 579.7 757.9 581.8 765.5 582.6C773.1 583.4 776.0 582.6 782.6 584.0C789.2 585.4 797.8 589.4 805.4 591.0C813.0 592.6 820.6 592.1 828.2 593.4C835.8 594.7 843.9 597.7 851.0 599.0C858.1 600.3 864.4 601.5 871.0 601.0C877.6 600.5 885.2 597.9 890.9 596.0C896.6 594.1 900.4 590.7 905.1 589.7C909.9 588.8 911.8 589.3 919.4 590.3C927.0 591.2 943.1 594.2 950.7 595.4C958.3 596.6 961.3 597.2 965.0 597.4C968.7 597.6 971.7 596.9 973.0 596.8" fill="none" stroke="#dd77dd" stroke-width="1" shape-rendering="crispEdges"></path><path d="M13.7 565.5C18.5 565.8 35.0 567.3 42.7 567.0C50.4 566.7 51.2 564.3 59.8 563.5C68.3 562.7 84.0 563.2 94.0 562.0C104.0 560.8 106.9 557.6 119.7 556.4C132.5 555.2 152.9 555.2 171.0 554.7C189.1 554.2 214.2 552.0 228.0 553.5C241.8 555.0 243.2 562.6 253.6 563.5C264.1 564.4 277.4 558.8 290.7 559.0C304.0 559.2 318.1 564.4 333.4 565.0C348.7 565.6 367.8 562.5 382.7 562.6C397.6 562.7 410.7 565.4 422.6 565.5C434.5 565.6 446.9 565.2 454.0 563.5C461.1 561.8 461.6 557.9 465.4 555.5C469.2 553.1 469.2 550.5 476.8 549.3C484.4 548.1 500.6 549.3 511.0 548.4C521.5 547.5 526.2 544.7 539.5 544.0C552.8 543.3 580.3 542.5 590.8 544.0C601.2 545.5 598.4 549.7 602.2 552.7C606.0 555.7 607.0 560.6 613.6 562.0C620.2 563.4 633.9 560.8 642.0 561.2C650.1 561.6 655.7 563.8 662.0 564.6C668.3 565.4 672.2 565.2 680.0 566.0C687.8 566.8 694.2 568.9 708.5 569.2C722.8 569.5 753.1 568.3 765.5 567.8C777.9 567.3 776.0 566.7 782.6 566.0C789.2 565.3 797.8 564.0 805.4 563.5C813.0 563.0 820.1 563.8 828.2 563.2C836.3 562.6 845.2 560.3 853.8 559.8C862.3 559.3 871.9 559.6 879.5 560.4C887.1 561.2 892.3 563.9 899.4 564.6C906.5 565.3 914.1 565.0 922.2 564.6C930.3 564.2 939.8 562.6 947.9 562.0C956.0 561.4 966.9 561.3 970.7 561.2" fill="none" stroke="#19b9d9" stroke-width="1" stroke-dasharray="3 3" shape-rendering="crispEdges"></path><path d="M13.7 580.6C18.5 580.3 35.0 578.7 42.7 579.0C50.4 579.3 51.2 581.9 59.8 582.6C68.3 583.3 83.5 581.9 94.0 583.0C104.5 584.1 109.7 587.7 122.5 589.0C135.3 590.3 153.4 590.1 171.0 590.6C188.6 591.1 214.7 593.3 228.0 592.0C241.3 590.7 239.9 583.6 250.8 582.6C261.7 581.6 279.7 586.7 293.5 586.3C307.3 585.9 323.3 580.9 333.4 580.3C343.5 579.7 344.5 582.1 354.2 582.6C363.9 583.1 379.9 583.5 391.3 583.0C402.7 582.5 412.2 579.9 422.6 579.7C433.1 579.5 446.9 580.5 454.0 582.0C461.1 583.5 461.4 586.6 465.4 589.0C469.4 591.4 470.6 594.9 478.2 596.3C485.8 597.7 500.8 596.4 511.0 597.4C521.2 598.4 526.7 601.6 539.5 602.5C552.3 603.4 578.0 604.4 588.0 603.0C598.0 601.6 595.0 597.3 599.3 594.0C603.6 590.7 607.0 584.6 613.6 583.0C620.2 581.4 631.1 585.1 639.2 584.6C647.3 584.1 655.2 581.3 662.0 580.3C668.8 579.2 672.2 579.0 680.0 578.3C687.8 577.6 694.2 576.3 708.5 576.3C722.8 576.3 753.1 577.8 765.5 578.3C777.9 578.8 776.0 578.6 782.6 579.2C789.2 579.8 797.8 581.3 805.4 582.0C813.0 582.7 820.1 582.4 828.2 583.2C836.3 584.0 845.2 586.3 853.8 586.9C862.3 587.5 871.9 587.7 879.5 586.9C887.1 586.1 892.3 582.8 899.4 582.0C906.5 581.2 914.1 581.5 922.2 582.0C930.3 582.5 939.8 584.3 947.9 584.9C956.0 585.5 966.9 585.3 970.7 585.4" fill="none" stroke="#19b9d9" stroke-width="1" stroke-dasharray="3 3" shape-rendering="crispEdges"></path><path d="M13.7 565.0C15.2 566.4 19.6 573.3 22.8 573.5C26.0 573.7 29.7 567.4 32.8 566.3C35.9 565.2 38.4 563.8 41.3 567.0C44.1 570.2 47.0 581.5 49.9 585.4C52.8 589.3 55.3 591.8 58.4 590.6C61.5 589.4 64.4 583.3 68.4 578.3C72.4 573.3 78.3 563.2 82.6 560.6C86.9 558.0 89.7 566.5 94.0 562.6C98.3 558.7 104.5 543.5 108.3 537.0C112.1 530.5 114.4 524.8 116.8 523.6C119.2 522.4 120.3 524.4 122.5 530.0C124.7 535.6 127.1 549.5 129.7 557.0C132.3 564.5 135.6 572.4 138.2 575.0C140.8 577.6 142.5 574.4 145.3 572.6C148.2 570.8 152.5 564.5 155.3 564.0C158.2 563.5 159.8 566.7 162.4 569.8C165.0 572.9 168.2 579.1 171.0 582.6C173.8 586.1 176.4 589.3 179.5 590.6C182.6 591.9 185.7 591.9 189.5 590.6C193.3 589.3 197.8 584.8 202.3 583.0C206.8 581.2 211.2 582.0 216.6 580.0C222.0 578.0 230.3 572.3 235.0 571.0C239.7 569.7 241.4 571.6 245.0 572.0C248.6 572.4 252.4 575.3 256.5 573.5C260.6 571.7 265.3 563.2 269.3 561.0C273.3 558.8 276.4 559.2 280.7 560.0C285.0 560.8 288.6 564.7 295.0 565.5C301.4 566.3 313.3 564.2 319.0 564.6C324.7 565.0 325.2 564.6 329.0 568.0C332.8 571.4 338.3 582.2 342.0 585.0C345.7 587.8 348.4 587.1 351.4 585.0C354.4 582.9 357.4 575.1 360.0 572.6C362.6 570.1 364.4 569.1 367.0 569.8C369.6 570.5 373.0 575.0 375.6 577.0C378.2 579.0 380.6 581.5 382.7 582.0C384.8 582.5 386.0 582.0 388.4 580.3C390.8 578.6 392.7 573.3 397.0 572.0C401.3 570.7 408.3 574.0 414.0 572.6C419.7 571.2 426.7 566.0 431.2 563.5C435.7 561.0 438.3 557.6 441.2 557.5C444.1 557.4 446.3 560.6 448.3 562.6C450.3 564.6 451.7 572.6 453.4 569.8C455.1 566.9 456.3 555.7 458.3 545.5C460.3 535.3 462.9 516.8 465.4 508.5C467.9 500.2 471.0 496.4 473.4 495.7C475.8 495.0 477.6 499.2 479.6 504.2C481.6 509.2 483.4 516.8 485.3 525.6C487.2 534.4 489.1 549.4 491.0 557.0C492.9 564.6 493.9 567.7 496.7 571.2C499.5 574.8 504.2 575.3 508.0 578.3C511.8 581.2 516.2 587.1 519.5 588.9C522.8 590.7 525.4 589.7 528.0 588.9C530.6 588.1 532.8 586.0 535.2 584.0C537.6 582.0 538.3 578.5 542.3 577.0C546.3 575.5 552.8 575.6 559.4 575.0C566.0 574.4 575.1 573.3 582.2 573.5C589.3 573.7 597.0 575.7 602.2 576.0C607.4 576.3 609.8 576.2 613.6 575.5C617.4 574.8 619.3 573.0 625.0 571.8C630.7 570.6 640.7 569.3 647.8 568.3C654.9 567.2 662.3 566.2 667.7 565.5C673.1 564.8 675.3 564.8 680.0 564.0C684.7 563.2 691.4 560.6 695.7 560.6C700.0 560.6 702.3 562.5 705.6 564.0C708.9 565.5 712.0 570.0 715.6 569.8C719.2 569.6 724.1 563.7 727.0 562.6C729.9 561.5 730.3 562.6 732.7 563.2C735.1 563.8 738.4 567.4 741.3 566.3C744.1 565.2 746.5 558.8 749.8 556.4C753.1 554.0 758.1 553.1 761.2 551.8C764.3 550.5 766.2 548.1 768.3 548.4C770.4 548.7 771.9 550.2 774.0 553.5C776.1 556.8 778.6 563.8 781.2 568.3C783.8 572.8 784.7 578.1 789.7 580.3C794.7 582.4 806.0 581.5 811.0 581.2C816.0 580.9 817.0 578.1 819.6 578.3C822.2 578.5 824.6 580.9 826.8 582.6C828.9 584.3 830.6 587.1 832.5 588.3C834.4 589.5 835.6 587.3 838.2 589.7C840.8 592.1 845.5 600.3 848.1 602.5C850.7 604.7 851.4 604.1 853.8 603.0C856.2 601.9 859.1 597.5 862.4 596.0C865.7 594.5 869.0 597.8 873.8 594.0C878.5 590.2 887.1 576.3 890.9 573.5C894.7 570.7 894.2 573.6 896.6 577.0C899.0 580.4 902.7 590.3 905.1 594.0C907.5 597.7 908.9 598.8 910.8 599.0C912.7 599.2 913.6 598.9 916.5 595.4C919.4 591.9 924.2 581.4 928.0 578.3C931.8 575.2 936.2 577.8 939.3 577.0C942.4 576.2 943.9 575.0 946.5 573.5C949.1 572.0 951.9 568.5 955.0 567.8C958.1 567.1 961.9 568.2 965.0 569.2C968.1 570.2 972.1 572.8 973.5 573.5" fill="none" stroke="#1e90ff" stroke-width="2.200" stroke-linejoin="round" shape-rendering="crispEdges"></path><path d="M13 634v6h6z" fill="#6f7f95"></path><path d="M12.5 640v4M76.5 640v4M140.5 640v4M204.5 640v4M268.5 640v4M332.5 640v4M396.5 640v4M460.5 640v4M524.5 640v4M588.5 640v4M652.5 640v4M716.5 640v4M780.5 640v4M844.5 640v4M908.5 640v4M972.5 640v4" stroke="#fff" stroke-width="1" shape-rendering="crispEdges"></path></svg>
<div style="left:988px;top:146px;width:2px;height:1px;background:#fff;"></div><span class="t ax" style="left: 993.5px; top: 141.9px; --w: 32.500; transform-origin: 0px 0px; transform: scaleX(0.9463);">1.17091</span>
<div style="left:988px;top:180px;width:2px;height:1px;background:#fff;"></div><span class="t ax" style="left: 993.5px; top: 175.9px; --w: 32.500; transform-origin: 0px 0px; transform: scaleX(0.9463);">1.16956</span>
<div style="left:988px;top:214px;width:2px;height:1px;background:#fff;"></div><span class="t ax" style="left: 993.5px; top: 209.9px; --w: 32.500; transform-origin: 0px 0px; transform: scaleX(0.9463);">1.16821</span>
<div style="left:988px;top:248px;width:2px;height:1px;background:#fff;"></div><span class="t ax" style="left: 993.5px; top: 243.9px; --w: 32.500; transform-origin: 0px 0px; transform: scaleX(0.9463);">1.16686</span>
<div style="left:988px;top:282px;width:2px;height:1px;background:#fff;"></div><span class="t ax" style="left: 993.5px; top: 277.9px; --w: 32.500; transform-origin: 0px 0px; transform: scaleX(0.9463);">1.16551</span>
<div style="left:988px;top:315px;width:2px;height:1px;background:#fff;"></div><span class="t ax" style="left: 993.5px; top: 310.9px; --w: 32.500; transform-origin: 0px 0px; transform: scaleX(0.9463);">1.16421</span>
<div style="left:988px;top:348px;width:2px;height:1px;background:#fff;"></div><span class="t ax" style="left: 993.5px; top: 343.9px; --w: 32.500; transform-origin: 0px 0px; transform: scaleX(0.9463);">1.16291</span>
<div style="left:988px;top:381px;width:2px;height:1px;background:#fff;"></div><span class="t ax" style="left: 993.5px; top: 376.9px; --w: 32.500; transform-origin: 0px 0px; transform: scaleX(0.9463);">1.16156</span>
<div style="left:988px;top:415px;width:2px;height:1px;background:#fff;"></div><span class="t ax" style="left: 993.5px; top: 410.9px; --w: 32.500; transform-origin: 0px 0px; transform: scaleX(0.9463);">1.16021</span>
<div style="left:988px;top:449px;width:2px;height:1px;background:#fff;"></div><span class="t ax" style="left: 993.5px; top: 444.9px; --w: 32.500; transform-origin: 0px 0px; transform: scaleX(0.9463);">1.15886</span>
<div style="left:988px;top:482px;width:2px;height:1px;background:#fff;"></div><span class="t ax" style="left: 993.5px; top: 477.9px; --w: 32.500; transform-origin: 0px 0px; transform: scaleX(0.9463);">1.15756</span>
<div style="left:989px;top:360px;width:40px;height:11px;background:#fff;"></div><span class="t ax" style="left: 993.5px; top: 360.9px; color: rgb(0, 0, 0); --w: 32.500; transform-origin: 0px 0px; transform: scaleX(0.9463);">1.16222</span>
<span class="t ax" style="left: 991px; top: 489.9px; --w: 33.5; transform-origin: 0px 0px; transform: scaleX(0.9754);">0.00597</span>
<span class="t ax" style="left: 991px; top: 568.9px; --w: 18.0; transform-origin: 0px 0px; transform: scaleX(0.973);">0.00</span>
<span class="t ax" style="left: 991px; top: 629.4px; --w: 36.5; transform-origin: 0px 0px; transform: scaleX(0.9729);">-0.00472</span>
<div style="left:988px;top:573px;width:2px;height:1px;background:#fff;"></div>
<span class="t ax" style="left: 12px; top: 644px; --w: 51; transform-origin: 0px 0px; transform: scaleX(0.9464);">12 Sep 2018</span>
<span class="t ax" style="left: 76px; top: 644px; --w: 54; transform-origin: 0px 0px; transform: scaleX(0.9552);">12 Sep 15:45</span>
<span class="t ax" style="left: 140px; top: 644px; --w: 54; transform-origin: 0px 0px; transform: scaleX(0.9552);">12 Sep 19:45</span>
<span class="t ax" style="left: 204px; top: 644px; --w: 54; transform-origin: 0px 0px; transform: scaleX(0.9552);">12 Sep 23:45</span>
<span class="t ax" style="left: 268px; top: 644px; --w: 54; transform-origin: 0px 0px; transform: scaleX(0.9552);">13 Sep 03:45</span>
<span class="t ax" style="left: 332px; top: 644px; --w: 54; transform-origin: 0px 0px; transform: scaleX(0.9552);">13 Sep 07:45</span>
<span class="t ax" style="left: 396px; top: 644px; --w: 54; transform-origin: 0px 0px; transform: scaleX(0.9673);">13 Sep 11:45</span>
<span class="t ax" style="left: 460px; top: 644px; --w: 54; transform-origin: 0px 0px; transform: scaleX(0.9552);">13 Sep 15:45</span>
<span class="t ax" style="left: 524px; top: 644px; --w: 54; transform-origin: 0px 0px; transform: scaleX(0.9552);">13 Sep 19:45</span>
<span class="t ax" style="left: 588px; top: 644px; --w: 54; transform-origin: 0px 0px; transform: scaleX(0.9552);">13 Sep 23:45</span>
<span class="t ax" style="left: 652px; top: 644px; --w: 54; transform-origin: 0px 0px; transform: scaleX(0.9552);">14 Sep 03:45</span>
<span class="t ax" style="left: 716px; top: 644px; --w: 54; transform-origin: 0px 0px; transform: scaleX(0.9552);">14 Sep 07:45</span>
<span class="t ax" style="left: 780px; top: 644px; --w: 54; transform-origin: 0px 0px; transform: scaleX(0.9673);">14 Sep 11:45</span>
<span class="t ax" style="left: 844px; top: 644px; --w: 54; transform-origin: 0px 0px; transform: scaleX(0.9552);">14 Sep 15:45</span>
<span class="t ax" style="left: 908px; top: 644px; --w: 54; transform-origin: 0px 0px; transform: scaleX(0.9552);">14 Sep 19:45</span>
<span class="t ax" style="left: 972px; top: 644px; --w: 54; transform-origin: 0px 0px; transform: scaleX(0.9552);">14 Sep 23:45</span>
<svg style="left:16px;top:120px;" width="8" height="5"><path d="M.5 0h7L4 4z" fill="#fff"></path></svg>
<span class="t ax" style="left: 28px; top: 117.5px; --w: 101; transform-origin: 0px 0px; transform: scaleX(1.0014);">EURUSD,M15  1.16250</span>
<span class="t ax" style="left: 17px; top: 492px; --w: 221; transform-origin: 0px 0px; transform: scaleX(0.9708);">M15 rbci 0.00165 0.00082 -0.00082 -0.00165 0.00001</span>
<!-- ===== dialog ===== -->
<div id="dlg" style="left:125px;top:82px;width:619px;height:309px;border-radius:7px 7px 6px 6px;border:1px solid rgba(30,38,50,.92);box-shadow:inset 0 0 0 1px rgba(240,245,252,.78),0 1px 7px 1px rgba(0,0,0,.55);background:linear-gradient(to bottom,#d6e5f6 0,#c9dcf2 12px,#bad0ea 23px,#a3b7cf 27px,#7f90a5 30px,#56626f 33px,#303842 35px,#1c232d 38px,#1a2029 100%);overflow:hidden;">
  <div style="left:0;top:0;width:200px;height:26px;background:linear-gradient(to right,rgba(240,246,253,.85),rgba(240,246,253,0));"></div>
  <div style="left:309px;top:12px;width:24px;height:8px;background:rgba(100,135,180,.5);filter:blur(3px);"></div>
  <div style="left:339px;top:12px;width:15px;height:8px;background:rgba(100,135,180,.42);filter:blur(3px);"></div>
  <div style="left:371px;top:12px;width:18px;height:8px;background:rgba(100,135,180,.45);filter:blur(3px);"></div>
  <div style="left:403px;top:12px;width:21px;height:8px;background:rgba(100,135,180,.45);filter:blur(3px);"></div>
  <div style="left:431px;top:12px;width:15px;height:8px;background:rgba(100,135,180,.4);filter:blur(3px);"></div>
</div>
<span class="t" style="left: 133px; top: 94px; font-size: 12px; text-shadow: rgb(255, 255, 255) 0px 0px 5px, rgb(255, 255, 255) 0px 0px 9px, rgba(255, 255, 255, 0.8) 0px 0px 12px; --w: 285; transform-origin: 0px 0px; transform: scaleX(1.0174);">Custom Indicator - Digital filters smoothed - separate</span>
<!-- caption buttons -->
<div style="left:639px;top:83px;width:37px;height:25px;border:1px solid #3c4658;border-top:none;border-right:none;border-radius:0 0 0 5px;background:linear-gradient(to bottom,#d4e1f0 0,#bccee2 46%,#9cb3cc 50%,#a9bed6 85%,#b6c9de 100%);box-shadow:inset 1px -1px 0 rgba(255,255,255,.55);"></div>
<div style="left:675px;top:83px;width:62px;height:25px;border:1px solid #5a1c14;border-top:none;border-radius:0 0 5px 0;background:linear-gradient(to bottom,#ecb0a2 0,#dd8a78 44%,#c83a20 52%,#cf4a2c 80%,#dc6e4c 100%);box-shadow:inset 0 -1px 0 rgba(255,215,195,.55),inset 1px 0 0 rgba(255,215,195,.45),inset -1px 0 0 rgba(255,215,195,.45);"></div>
<span class="t" style="left:651px;top:84px;font-size:23px;font-weight:bold;color:#fafafa;-webkit-text-stroke:2px #525c6c;paint-order:stroke fill;transform:scaleX(.88);transform-origin:0 0;">?</span>
<svg style="left:697px;top:87px;" width="18" height="16" viewBox="0 0 18 16"><path d="M1 .8h4.500L9 4.900 12.500 .8H17L11.300 8 17 15.200h-4.500L9 11.100 5.500 15.200H1L6.700 8z" fill="#f6f6f6" stroke="#5a4648" stroke-width="1"></path></svg>
<!-- client -->
<div style="left:133px;top:118px;width:603px;height:265px;background:#f0f0f0;box-shadow:0 0 0 1px #2a3038,0 0 0 2px rgba(225,232,240,.75);"></div>
<!-- tab panel -->
<div style="left:139px;top:145px;width:591px;height:208px;background:#fff;border:1px solid #898c95;"></div>
<div class="dtab" style="left:141px;top:127px;width:42px;height:19px;"></div>
<div class="dtab" style="left:184px;top:127px;width:49px;height:19px;"></div>
<div class="dtab" style="left:280px;top:127px;width:40px;height:19px;border-left:none;"></div>
<div class="dtab" style="left:321px;top:127px;width:42px;height:19px;"></div>
<div class="dtab" style="left:364px;top:127px;width:67px;height:19px;"></div>
<div style="left:139px;top:145px;width:591px;height:1px;background:#898c95;"></div>
<div style="left:234px;top:125px;width:46px;height:22px;background:#fff;border:1px solid #898c95;border-bottom:none;"></div>
<span class="t d" style="left: 147px; top: 131.5px; --w: 27.500; transform-origin: 0px 0px; transform: scaleX(0.9148);">About</span>
<span class="t d" style="left: 188px; top: 131.5px; --w: 41; transform-origin: 0px 0px; transform: scaleX(0.8788);">Common</span>
<span class="t d" style="left: 242px; top: 130.3px; --w: 28; transform-origin: 0px 0px; transform: scaleX(0.8938);">Inputs</span>
<span class="t d" style="left: 283.5px; top: 131.5px; --w: 29; transform-origin: 0px 0px; transform: scaleX(0.8726);">Colors</span>
<span class="t d" style="left: 325.5px; top: 131.5px; --w: 30.500; transform-origin: 0px 0px; transform: scaleX(0.9173);">Levels</span>
<span class="t d" style="left: 368.5px; top: 131.5px; --w: 57.500; transform-origin: 0px 0px; transform: scaleX(0.8934);">Visualization</span>
<!-- list -->
<div id="lv" style="left:151px;top:155px;width:457px;height:188px;background:#fff;border:1px solid #828790;overflow:hidden;">
  <div style="left:0;top:1px;width:454px;height:23px;background:linear-gradient(to bottom,#fff 0,#fff 42%,#f3f4f6 44%,#f0f1f3 100%);border-bottom:1px solid #d5d5d5;"></div>
  <div style="left:226px;top:1px;width:1px;height:22px;background:#dcdee2;"></div>
  <div style="left:454px;top:1px;width:1px;height:22px;background:#dcdee2;"></div>
  <span class="t d" style="left: 7px; top: 8px; --w: 37.500; transform-origin: 0px 0px; transform: scaleX(0.907);">Variable</span>
  <span class="t d" style="left: 233px; top: 8px; --w: 26; transform-origin: 0px 0px; transform: scaleX(0.9103);">Value</span>
  <div class="row" style="top:25px;"></div>
  <div class="row alt" style="top:45px;"></div>
  <div class="row" style="top:65px;"></div>
  <div class="row alt" style="top:85px;"></div>
  <div class="row" style="top:105px;"></div>
  <div class="row alt" style="top:125px;"></div>
  <div class="row" style="top:145px;"></div>
  <div style="left:226px;top:24px;width:1px;height:141px;background:#d0d0d0;"></div>
  <span class="t d" style="left: 22px; top: 29.5px; --w: 51.500; transform-origin: 0px 0px; transform: scaleX(0.8825);">TimeFrame</span><span class="t d" style="left: 229.5px; top: 29.5px; --w: 85; transform-origin: 0px 0px; transform: scaleX(0.8867);">Current time frame</span>
  <span class="t d" style="left: 22px; top: 49.5px; --w: 45; transform-origin: 0px 0px; transform: scaleX(0.8911);">FilterType</span><span class="t d" style="left:229.500px;top:49.500px;">2</span>
  <span class="t d" style="left: 22px; top: 69.5px; --w: 23.500; transform-origin: 0px 0px; transform: scaleX(0.8968);">Price</span><span class="t d" style="left:229.500px;top:69.500px;">0</span>
  <span class="t d" style="left: 22px; top: 89.5px; --w: 32; transform-origin: 0px 0px; transform: scaleX(0.9094);">Length</span><span class="t d" style="left:229.500px;top:89.500px;">5</span>
  <span class="t d" style="left: 22px; top: 109.5px; --w: 29.500; transform-origin: 0px 0px; transform: scaleX(0.9046);">Phase</span><span class="t d" style="left: 229.5px; top: 109.5px; --w: 15.500; transform-origin: 0px 0px; transform: scaleX(0.9688);">0.0</span>
  <span class="t d" style="left: 22px; top: 129.5px; --w: 77.500; transform-origin: 0px 0px; transform: scaleX(0.9113);">LengthForBands</span><span class="t d" style="left: 229.5px; top: 129.5px; --w: 12.500; transform-origin: 0px 0px; transform: scaleX(0.9768);">52</span>
  <span class="t d" style="left: 22px; top: 149.5px; --w: 49; transform-origin: 0px 0px; transform: scaleX(0.9014);">Interpolate</span><span class="t d" style="left: 229.5px; top: 149.5px; --w: 18.500; transform-origin: 0px 0px; transform: scaleX(0.933);">true</span>
  <!-- row icons -->
  <svg style="left:0;top:0;" width="0" height="0"><defs>
<linearGradient id="gy" x1="0" y1="0" x2="0" y2="1"><stop offset="0" stop-color="#f9f2b0"></stop><stop offset="1" stop-color="#e2cf55"></stop></linearGradient>
<linearGradient id="gb" x1="0" y1="0" x2="0" y2="1"><stop offset="0" stop-color="#b8d7f5"></stop><stop offset="1" stop-color="#5b97d6"></stop></linearGradient>
<linearGradient id="gc" x1="0" y1="0" x2="0" y2="1"><stop offset="0" stop-color="#c8f0f4"></stop><stop offset="1" stop-color="#7fd0dc"></stop></linearGradient>
<linearGradient id="gg" x1="0" y1="0" x2="0" y2="1"><stop offset="0" stop-color="#a8f0a0"></stop><stop offset="1" stop-color="#48c848"></stop></linearGradient>
</defs></svg>
  <svg style="left:2px;top:26px;" width="16" height="17" viewBox="0 0 16 17"><path d="M1.500 .5h9.500l4.500 4v10.500l-1.500 1.200-1.500-1.200-1.500 1.200-1.500-1.200-1.500 1.200-1.500-1.200-1.500 1.200-1.500-1.200-1.500 1.200-1-1.200V1.500z" fill="url(#gy)" stroke="#c9b850" stroke-width=".9"></path><path d="M11 .5v4h4.500" fill="#fdf8d0" stroke="#c9b850" stroke-width=".7"></path><text x="1.800" y="11.300" font-family="Liberation Sans,sans-serif" font-size="8.500" fill="#332d00" textLength="9.500" lengthAdjust="spacingAndGlyphs">ab</text></svg>
  <svg style="left:2px;top:46px;" width="16" height="17" viewBox="0 0 16 17"><path d="M1.500 .5h9.500l4.500 4v10.500l-1.500 1.200-1.500-1.200-1.500 1.200-1.500-1.200-1.500 1.200-1.500-1.200-1.500 1.200-1.500-1.200-1.500 1.200-1-1.200V1.500z" fill="url(#gb)" stroke="#5f93cf" stroke-width=".9"></path><path d="M11 .5v4h4.500" fill="#deedfb" stroke="#5f93cf" stroke-width=".7"></path><text x="1.600" y="11.500" font-family="Liberation Sans,sans-serif" font-size="6.800" font-weight="bold" fill="#06184a" textLength="10.500" lengthAdjust="spacingAndGlyphs">123</text></svg>
  <svg style="left:2px;top:66px;" width="16" height="17" viewBox="0 0 16 17"><path d="M1.500 .5h9.500l4.500 4v10.500l-1.500 1.200-1.500-1.200-1.500 1.200-1.500-1.200-1.500 1.200-1.500-1.200-1.500 1.200-1.500-1.200-1.500 1.200-1-1.200V1.500z" fill="url(#gb)" stroke="#5f93cf" stroke-width=".9"></path><path d="M11 .5v4h4.500" fill="#deedfb" stroke="#5f93cf" stroke-width=".7"></path><text x="1.600" y="11.500" font-family="Liberation Sans,sans-serif" font-size="6.800" font-weight="bold" fill="#06184a" textLength="10.500" lengthAdjust="spacingAndGlyphs">123</text></svg>
  <svg style="left:2px;top:86px;" width="16" height="17" viewBox="0 0 16 17"><path d="M1.500 .5h9.500l4.500 4v10.500l-1.500 1.200-1.500-1.200-1.500 1.200-1.500-1.200-1.500 1.200-1.500-1.200-1.500 1.200-1.500-1.200-1.500 1.200-1-1.200V1.500z" fill="url(#gb)" stroke="#5f93cf" stroke-width=".9"></path><path d="M11 .5v4h4.500" fill="#deedfb" stroke="#5f93cf" stroke-width=".7"></path><text x="1.600" y="11.500" font-family="Liberation Sans,sans-serif" font-size="6.800" font-weight="bold" fill="#06184a" textLength="10.500" lengthAdjust="spacingAndGlyphs">123</text></svg>
  <svg style="left:2px;top:106px;" width="16" height="17" viewBox="0 0 16 17"><path d="M1.500 .5h9.500l4.500 4v10.500l-1.500 1.200-1.500-1.200-1.500 1.200-1.500-1.200-1.500 1.200-1.500-1.200-1.500 1.200-1.500-1.200-1.500 1.200-1-1.200V1.500z" fill="url(#gc)" stroke="#5ab4c4" stroke-width=".9"></path><path d="M11 .5v4h4.500" fill="#e8fafc" stroke="#5ab4c4" stroke-width=".7"></path><text x="1.500" y="11.500" font-family="Liberation Sans,sans-serif" font-size="10" font-weight="bold" fill="#0a4a5a">½</text></svg>
  <svg style="left:2px;top:126px;" width="16" height="17" viewBox="0 0 16 17"><path d="M1.500 .5h9.500l4.500 4v10.500l-1.500 1.200-1.500-1.200-1.500 1.200-1.500-1.200-1.500 1.200-1.500-1.200-1.500 1.200-1.500-1.200-1.500 1.200-1-1.200V1.500z" fill="url(#gb)" stroke="#5f93cf" stroke-width=".9"></path><path d="M11 .5v4h4.500" fill="#deedfb" stroke="#5f93cf" stroke-width=".7"></path><text x="1.600" y="11.500" font-family="Liberation Sans,sans-serif" font-size="6.800" font-weight="bold" fill="#06184a" textLength="10.500" lengthAdjust="spacingAndGlyphs">123</text></svg>
  <svg style="left:2px;top:146px;" width="16" height="17" viewBox="0 0 16 17"><path d="M1.500 .5h9.500l4.500 4v10.500l-1.500 1.200-1.500-1.200-1.500 1.200-1.500-1.200-1.500 1.200-1.500-1.200-1.500 1.200-1.500-1.200-1.500 1.200-1-1.200V1.500z" fill="url(#gg)" stroke="#3aae3a" stroke-width=".9"></path><path d="M11 .5v4h4.500" fill="#dcfadc" stroke="#3aae3a" stroke-width=".7"></path><path d="M2.500 11.500l3.500-4h3M9.500 10h3.500" fill="none" stroke="#0a5a0a" stroke-width="1.300"></path></svg>
</div>
<!-- buttons -->
<div class="btn" style="left:616px;top:287px;width:103px;height:21px;"><span class="t d" style="left: 38.4px; top: 4px; --w: 22.900; transform-origin: 0px 0px; transform: scaleX(0.8947);">Load</span></div>
<div class="btn" style="left:616px;top:320px;width:103px;height:21px;"><span class="t d" style="left: 38.4px; top: 4px; --w: 24.200; transform-origin: 0px 0px; transform: scaleX(0.923);">Save</span></div>
<div class="btn" style="left:492px;top:353px;width:73px;height:21px;border-color:#3c7fb1;box-shadow:inset 0 0 0 1px #48d8fb,inset 0 0 0 2px #b4ecfc;background:linear-gradient(to bottom,#f2f8fb 0,#e6f0f6 48%,#d0e4f0 52%,#c0dcec 100%);"><span class="t d" style="left: 27.4px; top: 4.5px; --w: 15.900; transform-origin: 0px 0px; transform: scaleX(0.9564);">OK</span></div>
<div class="btn" style="left:573px;top:353px;width:73px;height:21px;"><span class="t d" style="left: 18.1px; top: 4.5px; --w: 33.300; transform-origin: 0px 0px; transform: scaleX(0.9298);">Cancel</span></div>
<div class="btn" style="left:654px;top:353px;width:73px;height:21px;"><span class="t d" style="left: 21.3px; top: 4.5px; --w: 26.800; transform-origin: 0px 0px; transform: scaleX(0.8919);">Reset</span></div>
<div style="left:727px;top:377px;width:1px;height:5px;background:repeating-linear-gradient(#c0c0c0 0,#c0c0c0 1px,#fff 1px,#fff 2px,transparent 2px,transparent 3px);"></div>
<!-- ===== chart tabs ===== -->
<div style="left:8px;top:661px;width:1016px;height:3px;background:#fff;border-bottom:1px solid #505050;"></div>
<div style="left:8px;top:664px;width:1016px;height:18px;background:#f0f0f0;"></div>
<div style="left:8px;top:664px;width:2px;height:18px;background:#8a8a8a;"></div>
<span class="t tab" style="left: 25px; top: 667px; --w: 60; transform-origin: 0px 0px; transform: scaleX(0.8651);">EURUSD,H1</span>
<div class="sep" style="left:97px;top:667px;height:13px;background:#7a7a7a;"></div>
<span class="t tab" style="left: 109px; top: 667px; --w: 70; transform-origin: 0px 0px; transform: scaleX(0.9049);">GBPUSD,M15</span>
<div class="sep" style="left:190px;top:667px;height:13px;background:#7a7a7a;"></div>
<span class="t tab" style="left: 201px; top: 667px; --w: 69; transform-origin: 0px 0px; transform: scaleX(0.8919);">EURUSD,M30</span>
<div class="sep" style="left:282px;top:667px;height:13px;background:#7a7a7a;"></div>
<span class="t tab" style="left: 293px; top: 667px; --w: 74; transform-origin: 0px 0px; transform: scaleX(0.965);">AUDNZD,M30</span>
<div class="sep" style="left:378px;top:667px;height:13px;background:#7a7a7a;"></div>
<span class="t tab" style="left: 389px; top: 667px; --w: 60; transform-origin: 0px 0px; transform: scaleX(0.8651);">EURUSD,H1</span>
<div class="sep" style="left:461px;top:667px;height:13px;background:#7a7a7a;"></div>
<span class="t tab" style="left: 473px; top: 667px; --w: 73; transform-origin: 0px 0px; transform: scaleX(0.9687);">AUDCHF,M15</span>
<div class="sep" style="left:558px;top:667px;height:13px;background:#7a7a7a;"></div>
<span class="t tab" style="left: 569px; top: 667px; --w: 69; transform-origin: 0px 0px; transform: scaleX(0.8919);">EURUSD,M15</span>
<div style="left:650px;top:662px;width:92px;height:20px;background:#fff;border:1px solid #141414;border-top:none;box-shadow:1px 1px 0 #4a4a4a;"></div>
<span class="t tab" style="left: 661px; top: 667px; color: rgb(0, 0, 0); --w: 69; transform-origin: 0px 0px; transform: scaleX(0.8919);">EURUSD,M15</span>
<svg style="left:998px;top:668px;" width="24" height="8"><path d="M4 0v7L0 3.500zM19 0v7l4-3.500z" fill="#8a8a8a"></path></svg>
<!-- ===== terminal strip ===== -->
<div style="left:8px;top:682px;width:1016px;height:2px;background:#fafafa;"></div><div style="left:8px;top:684px;width:1016px;height:28px;background:#f0f0f0;"></div>
<div style="left:23px;top:687px;width:1005px;height:22px;background:#fff;border:1px solid #a6a6a6;border-bottom-color:#d0d0d0;"></div>
<svg style="left:12px;top:689px;" width="7" height="7"><path d="M.8 .8l5.400 5.400M6.200 .8l-5.400 5.400" stroke="#000" stroke-width="1.600"></path></svg>
<div style="left:13px;top:699px;width:4px;height:8px;background:repeating-linear-gradient(to bottom,#a0a0a0 0,#a0a0a0 1px,transparent 1px,transparent 2px);"></div>
<div style="left:29px;top:695px;width:7px;height:7px;border-radius:50%;background:radial-gradient(circle at 40% 40%,#d8d8d8,#9a9a9a);border:1px solid #8a8a8a;"></div>
<span class="t" style="left: 42px; top: 691.5px; font-size: 12px; --w: 362; transform-origin: 0px 0px; transform: scaleX(0.9357);">Balance: 48.50 USD  Profit/Loss: 0.00  Equity: 48.50  Free margin: 48.50</span>
<!-- ===== status bar ===== -->
<div style="left:8px;top:712px;width:1016px;height:20px;background:#f0f0f0;border-top:1px solid #a8a8a8;box-shadow:inset 0 1px 0 #fff;"></div>
<span class="t" style="left: 10px; top: 719.7px; font-size: 12px; --w: 92; transform-origin: 0px 0px; transform: scaleX(0.9258);">For Help, press F1</span>
<div class="sep" style="left:309px;top:716px;height:14px;background:#b0b0b0;"></div>
<span class="t" style="left: 316px; top: 719.7px; font-size: 12px; --w: 38; transform-origin: 0px 0px; transform: scaleX(0.9992);">Default</span>
<div class="sep" style="left:425px;top:716px;height:14px;background:#b0b0b0;"></div>
<span class="t" style="left: 431px; top: 719.7px; font-size: 12px; --w: 84; transform-origin: 0px 0px; transform: scaleX(0.8991);">2018.09.13 14:15</span>
<div class="sep" style="left:526px;top:716px;height:14px;background:#b0b0b0;"></div>
<span class="t" style="left: 533px; top: 719.7px; font-size: 12px; --w: 54; transform-origin: 0px 0px; transform: scaleX(0.9092);">O: 1.16275</span>
<div class="sep" style="left:598px;top:716px;height:14px;background:#b0b0b0;"></div>
<span class="t" style="left: 604px; top: 719.7px; font-size: 12px; --w: 54; transform-origin: 0px 0px; transform: scaleX(0.9196);">H: 1.16306</span>
<div class="sep" style="left:669px;top:716px;height:14px;background:#b0b0b0;"></div>
<span class="t" style="left: 676px; top: 719.7px; font-size: 12px; --w: 50; transform-origin: 0px 0px; transform: scaleX(0.8815);">L: 1.16227</span>
<div class="sep" style="left:737px;top:716px;height:14px;background:#b0b0b0;"></div>
<span class="t" style="left: 744px; top: 719.7px; font-size: 12px; --w: 52; transform-origin: 0px 0px; transform: scaleX(0.8856);">C: 1.16283</span>
<div class="sep" style="left:808px;top:716px;height:14px;background:#b0b0b0;"></div>
<span class="t" style="left: 813px; top: 719.7px; font-size: 12px; --w: 36; transform-origin: 0px 0px; transform: scaleX(0.8797);">V: 1067</span>
<div class="sep" style="left:874px;top:716px;height:14px;background:#b0b0b0;"></div>
<div style="left:879px;top:719px;width:23px;height:10px;background:repeating-linear-gradient(to right,#6b8e23 0,#6b8e23 2px,transparent 2px,transparent 3px);"></div><div style="left:888px;top:723px;width:14px;height:6px;background:repeating-linear-gradient(to right,#34587a 0,#34587a 2px,transparent 2px,transparent 3px);clip-path:polygon(0 60%,100% 0,100% 100%,0 100%);"></div>
<span class="t" style="left: 905px; top: 719.7px; font-size: 12px; --w: 34; transform-origin: 0px 0px; transform: scaleX(1.0397);">9/1 kb</span>
<!-- ===== taskbar ===== -->
<div id="taskbar" style="left:0;top:728px;width:1024px;height:40px;overflow:hidden;background:linear-gradient(to right,#2a6a8e 0,#34789f 5%,#4590c0 9%,#4d96c8 22%,#3a82c0 34%,#2a78c0 48%,#2a7ac4 62%,#2b68a8 74%,#24558f 84%,#1d4680 100%);">
  <div style="left:0;top:0;width:1024px;height:40px;background:linear-gradient(to bottom,rgba(10,30,60,.85) 0,rgba(10,30,60,.85) 1px,rgba(200,225,245,.6) 1px,rgba(220,235,250,.32) 2px,rgba(255,255,255,.2) 35%,rgba(255,255,255,.02) 50%,rgba(0,20,60,.1) 100%);"></div>
  <div style="left:380px;top:-10px;width:140px;height:60px;background:rgba(20,110,200,.5);filter:blur(12px);"></div>
  <div style="left:780px;top:-20px;width:30px;height:90px;background:rgba(120,190,240,.55);transform:rotate(-35deg);filter:blur(6px);"></div>
</div>
<!-- start orb -->
<div style="left:8px;top:729px;width:38px;height:38px;border-radius:50%;background:radial-gradient(circle at 50% 100%,#7fdcfb 0,#3aa4e4 28%,#2a74b4 55%,#2d5f92 78%,#3a6c9c 100%);box-shadow:0 0 0 1px rgba(12,40,75,.9),0 0 0 2px rgba(150,200,235,.35),inset 0 0 2px 1px rgba(190,230,255,.75);"></div>
<div style="left:11px;top:730px;width:32px;height:19px;border-radius:16px 16px 40% 40%/16px 16px 30% 30%;background:linear-gradient(to bottom,rgba(255,255,255,.3),rgba(255,255,255,.04));"></div>
<svg style="left:15px;top:735px;" width="26" height="26" viewBox="0 0 24 24"><path d="M2.200 5.200c3-2 6-2 9 0l-1.600 6.200c-3-2-6-2-9 0z" fill="#f25a22"></path><path d="M12.700 5.800c3 1.800 6 1.800 9.300-.5l-1.700 6.200c-3 2.300-6.200 2.200-9.200.5z" fill="#86c63c"></path><path d="M.3 12.900c3-2 6-2 9 0L7.700 19c-3-2-6-2-9 0z" fill="#2f9cf0"></path><path d="M10.800 13.400c3 1.800 6 1.800 9.300-.5L18.500 19c-3 2.300-6.200 2.200-9.200.5z" fill="#fcc22a"></path><path d="M2.200 5.200c3-2 6-2 9 0l-.6 2.300c-3-1.800-6-1.800-9 .1z" fill="#fff" opacity=".25"></path><path d="M12.700 5.800c3 1.800 6 1.800 9.300-.5l-.6 2.200c-3 2.200-6 2.200-9.200.5z" fill="#fff" opacity=".25"></path></svg>
<!-- chrome -->
<div class="tb" style="left:59px;top:729px;width:60px;height:39px;"></div>
<svg style="left:73px;top:732px;" width="32" height="32" viewBox="0 0 32 32"><circle cx="16" cy="16" r="15" fill="#fff"></circle><path d="M16 16L3 8.500A15 15 0 0 1 29 8.500z" fill="#e8453c"></path><path d="M16 16L29 8.500A15 15 0 0 1 16 31z" fill="#fbc116"></path><path d="M16 16L16 31A15 15 0 0 1 3 8.500z" fill="#2ea650"></path><path d="M16 9h13a15 15 0 0 0-26-.5l6.500 11z" fill="#e8453c"></path><path d="M22 19.500L16 31A15 15 0 0 0 29 8.500L16 9z" fill="#fbc116"></path><path d="M10 19.500L3 8.500A15 15 0 0 0 16 31l6-11.500z" fill="#2ea650"></path><circle cx="16" cy="16" r="7" fill="#fff"></circle><circle cx="16" cy="16" r="5.600" fill="#4a8af4"></circle></svg>
<!-- explorer -->
<div class="tb" style="left:122px;top:729px;width:54px;height:39px;"></div>
<div style="left:177px;top:729px;width:3px;height:39px;border:1px solid rgba(20,50,90,.7);border-left:none;background:rgba(120,170,220,.4);"></div>
<svg style="left:131px;top:733px;" width="36" height="32" viewBox="0 0 36 32"><path d="M2 5h11l2 3h17v20H2z" fill="#f3d27a" stroke="#c9a040" stroke-width="1"></path><path d="M2 11h30v17H2z" fill="#f9e39a" stroke="#d0a848" stroke-width="1"></path><rect x="5" y="2.500" width="5" height="3" fill="#3aaa3a"></rect><rect x="13" y="4" width="5" height="3" fill="#d03a3a"></rect><rect x="21" y="5.500" width="5" height="3" fill="#3a8ae0"></rect><path d="M7 29v-9c0-2 1-3 3-3h16c2 0 3 1 3 3v9h-6v-6H13v6z" fill="#8fc8f0" stroke="#5a9ad0" stroke-width="1"></path><path d="M9 19h18" stroke="#fff" stroke-width="1.500" opacity=".8"></path></svg>
<!-- mt4 -->
<div class="tb" style="left:183px;top:729px;width:60px;height:39px;"></div>
<svg style="left:196px;top:731px;" width="34" height="34" viewBox="0 0 34 34"><path d="M2 18L13 3l19 10-10 15z" fill="#fbf3d4" stroke="#b89030" stroke-width=".9"></path><path d="M13 3l2-1 19 9.500-2 1.500z" fill="#f4e6b0" stroke="#b89030" stroke-width=".6"></path><path d="M2 18l1 4 19 10v-4z" fill="#e0ae28" stroke="#a87a10" stroke-width=".8"></path><path d="M22 28l10-15 .5 4-9.500 15z" fill="#c8981c" stroke="#a87a10" stroke-width=".7"></path><path d="M32 13l1.500-.5M32 14.500l1.500-.5M32 16l1.500-.5" stroke="#c8b070" stroke-width=".8"></path><ellipse cx="16.500" cy="15" rx="7" ry="6.300" fill="#3f86c8" stroke="#1f4f88" stroke-width=".8"></ellipse><path d="M11.500 13c2-3 6-3.500 8-1.500l-2 2.500c-2-1-3 0-4 1.500zM14 19c2 1.500 5 1 7-1.500l-1.500-1.500c-1 2-3 2.500-4.500 1.500z" fill="#8fd24a"></path><path d="M15 11l5 6M18 11.500l-3.500 7" stroke="#f8f8f8" stroke-width="1.100"></path><path d="M19 16l1.500 2.500" stroke="#e86a20" stroke-width="1.400"></path></svg>
<!-- notepad -->
<div class="tb" style="left:245px;top:729px;width:60px;height:39px;"></div>
<svg style="left:258px;top:732px;" width="34" height="34" viewBox="0 0 34 34"><defs><linearGradient id="np" x1="0" y1="0" x2=".6" y2="1"><stop offset="0" stop-color="#d4f2fa"></stop><stop offset=".5" stop-color="#8fd4ea"></stop><stop offset="1" stop-color="#5fb4d4"></stop></linearGradient></defs><path d="M28 6l3 19-6 4.500-6-3.500z" fill="#f8fafc" stroke="#9aa8b4" stroke-width=".7"></path><path d="M21 24l8-3M22 26.500l8-4M24 28.500l6-3.500" stroke="#c4d0dc" stroke-width=".6"></path><path d="M28.200 5.800l1-.6 2.800 19-.9 1z" fill="#b08a5a"></path><path d="M13.600 3.500L28 6l-9 20L1.500 22z" fill="url(#np)" stroke="#5a9ab8" stroke-width=".8"></path><path d="M13.600 3.500L28 6l-3 7c-6 1.500-11 0-15-2.500z" fill="#fff" opacity=".35"></path><path d="M13.600 3.200l14.800 2.600" stroke="#6a7480" stroke-width="2" stroke-dasharray="1.200 1.100"></path></svg>
<!-- FBS (active) -->
<div class="tb" style="left:307px;top:729px;width:60px;height:39px;background:linear-gradient(to bottom,rgba(215,232,248,.85),rgba(150,195,235,.7) 50%,rgba(120,175,225,.65));border-color:#20406a;"></div>
<div style="left:321px;top:732px;width:32px;height:32px;background:#4c8030;"></div><div style="left:321px;top:732px;width:32px;height:32px;background:#3b6725;clip-path:polygon(26px 10px,32px 16px,32px 32px,13px 32px,6px 25px,6px 23px,26px 23px);"></div>
<span class="t" style="left: 327px; top: 740.7px; font-size: 14px; font-weight: bold; color: rgb(255, 255, 255); --w: 20; transform-origin: 0px 0px; transform: scaleX(0.7143);">FBS</span>
<div style="left:327px;top:755px;width:20px;height:2px;background:#fff;"></div>
<!-- tray -->
<svg style="left:866px;top:740px;" width="18" height="18" viewBox="0 0 18 18"><path d="M2.500 2v13" stroke="#fff" stroke-width="1.500"></path><path d="M3.500 3c3-1.500 5 1.500 8 0v6c-3 1.500-5-1.500-8 0z" fill="#fff"></path><circle cx="12" cy="12" r="4.300" fill="#e02020" stroke="#fff" stroke-width=".6"></circle><path d="M10.200 10.200l3.600 3.600M13.800 10.200l-3.600 3.600" stroke="#fff" stroke-width="1.400"></path></svg>
<svg style="left:891px;top:740px;" width="18" height="18" viewBox="0 0 18 18"><rect x="5.500" y="4.500" width="10" height="8" fill="#2a5a90" stroke="#fff" stroke-width="1.300"></rect><path d="M7 15.500h7M10.500 13v2.500" stroke="#fff" stroke-width="1.300"></path><path d="M2.500 1v4M4.500 1v4M1.500 5h4v3h-4zM3.500 8v5h2" stroke="#fff" stroke-width="1" fill="none"></path></svg>
<svg style="left:915px;top:740px;" width="18" height="18" viewBox="0 0 18 18"><path d="M1.500 6.500h3l4-4v13l-4-4h-3z" fill="#fff"></path><path d="M10.500 6.500c1 1.500 1 3.500 0 5M12.500 4.500c2 2.500 2 6.500 0 9" fill="none" stroke="#fff" stroke-width="1"></path></svg>
<span class="t" style="left: 952px; top: 735px; font-size: 12px; color: rgb(255, 255, 255); --w: 43; transform-origin: 0px 0px; transform: scaleX(0.9619);">5:25 PM</span>
<span class="t" style="left: 947px; top: 752px; font-size: 12px; color: rgb(255, 255, 255); --w: 53; transform-origin: 0px 0px; transform: scaleX(0.9927);">9/15/2018</span>
<div style="left:1010px;top:729px;width:16px;height:40px;border:1px solid rgba(10,30,60,.8);background:linear-gradient(to right,rgba(140,180,220,.5),rgba(70,110,160,.4));box-shadow:inset 1px 0 0 rgba(220,235,250,.5);"></div>
</div>


</body></html>
